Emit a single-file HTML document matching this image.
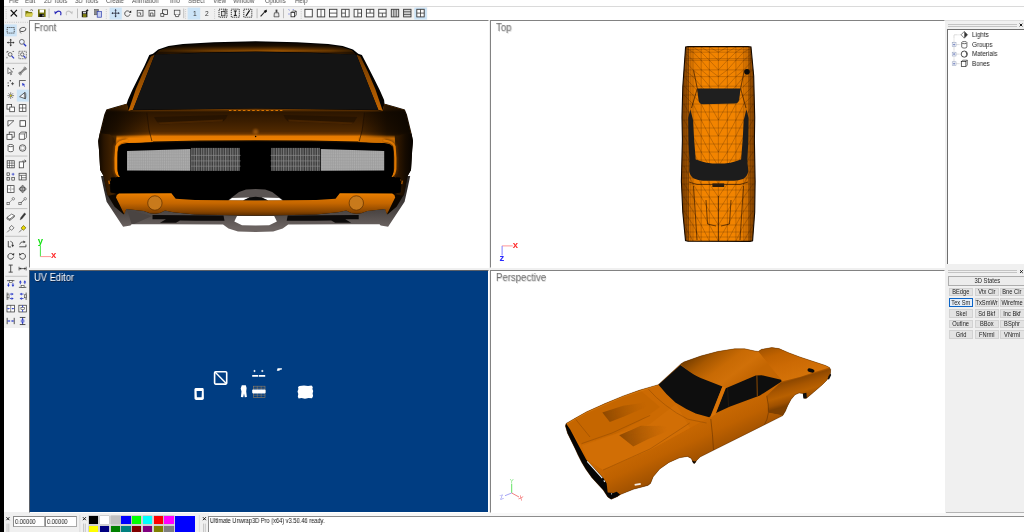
<!DOCTYPE html><html><head><meta charset="utf-8"><title>Ultimate Unwrap3D Pro</title><style>
html,body{margin:0;padding:0}
body{width:1024px;height:532px;position:relative;overflow:hidden;background:#f0f0f0;font-family:"Liberation Sans",sans-serif;color:#000}
.abs{position:absolute}
.t{position:absolute;white-space:nowrap;line-height:1;will-change:transform;transform-origin:0 50%}
.c{position:absolute;white-space:nowrap;line-height:1;will-change:transform;text-align:center}
.c span{display:inline-block}
.vp{position:absolute;background:#fff;box-sizing:border-box;border-top:1px solid #828282;border-left:1px solid #828282;border-right:1px solid #fff;border-bottom:1px solid #fff;overflow:hidden}
.lbl{will-change:transform;position:absolute;white-space:nowrap;font-size:10px;line-height:1;color:#6e6e6e;text-shadow:0.6px 0.6px 0 #d8d8d8;transform-origin:0 50%;transform:scaleX(0.96)}
.btn{position:absolute;box-sizing:border-box;border:1px solid #d2d2d2;background:#e3e3e3}
svg{position:absolute;left:0;top:0;overflow:visible}
</style></head><body>
<div class="abs" style="left:0;top:0;width:4px;height:532px;background:#000"></div>
<div class="abs" style="left:4px;top:0;width:1020px;height:6.4px;background:#fff"></div>
<div class="t" style="left:8.80px;top:-2.00px;font-size:6.6px;color:#505050;font-weight:400;transform:scaleX(0.91)">File</div>
<div class="t" style="left:25.00px;top:-2.00px;font-size:6.6px;color:#505050;font-weight:400;transform:scaleX(0.91)">Edit</div>
<div class="t" style="left:43.80px;top:-2.00px;font-size:6.6px;color:#505050;font-weight:400;transform:scaleX(0.91)">2D Tools</div>
<div class="t" style="left:75.00px;top:-2.00px;font-size:6.6px;color:#505050;font-weight:400;transform:scaleX(0.91)">3D Tools</div>
<div class="t" style="left:106.00px;top:-2.00px;font-size:6.6px;color:#505050;font-weight:400;transform:scaleX(0.91)">Create</div>
<div class="t" style="left:132.00px;top:-2.00px;font-size:6.6px;color:#505050;font-weight:400;transform:scaleX(0.91)">Animation</div>
<div class="t" style="left:169.50px;top:-2.00px;font-size:6.6px;color:#505050;font-weight:400;transform:scaleX(0.91)">Info</div>
<div class="t" style="left:188.00px;top:-2.00px;font-size:6.6px;color:#505050;font-weight:400;transform:scaleX(0.91)">Select</div>
<div class="t" style="left:212.50px;top:-2.00px;font-size:6.6px;color:#505050;font-weight:400;transform:scaleX(0.91)">View</div>
<div class="t" style="left:233.00px;top:-2.00px;font-size:6.6px;color:#505050;font-weight:400;transform:scaleX(0.91)">Window</div>
<div class="t" style="left:264.80px;top:-2.00px;font-size:6.6px;color:#505050;font-weight:400;transform:scaleX(0.91)">Options</div>
<div class="t" style="left:294.80px;top:-2.00px;font-size:6.6px;color:#505050;font-weight:400;transform:scaleX(0.91)">Help</div>
<div class="abs" style="left:4px;top:6.4px;width:1020px;height:13.6px;background:#f1f1f1;border-top:1px solid #dadada;box-sizing:border-box"></div>
<div class="abs" style="left:4px;top:20px;width:25px;height:308.4px;background:#f0f0f0"></div>
<div class="abs" style="left:4px;top:328.4px;width:25px;height:184px;background:#fff"></div>
<div class="vp" style="left:29px;top:20px;width:460px;height:248px"></div>
<div class="vp" style="left:490px;top:20px;width:455px;height:248px"></div>
<div class="vp" style="left:29px;top:270px;width:460px;height:243px;background:#003d82;border-top-color:#5a6068;border-left-color:#5a6068"></div>
<div class="vp" style="left:490px;top:270px;width:455px;height:243px"></div>
<div class="lbl" style="left:34.4px;top:23px">Front</div>
<div class="lbl" style="left:495.6px;top:23px">Top</div>
<div class="lbl" style="left:496.2px;top:273px">Perspective</div>
<div class="lbl" style="left:33.6px;top:273px;color:#fff;text-shadow:0.7px 0.7px 0 #0a1c3c;transform:scaleX(0.935)">UV Editor</div>
<div class="abs" style="left:945px;top:20px;width:79px;height:493px;background:#f0f0f0;border-top:1px solid #dedede;box-sizing:border-box"></div>
<div class="abs" style="left:948px;top:23.9px;width:69px;height:0.9px;background:#c4c4c4"></div>
<div class="abs" style="left:948px;top:25.799999999999997px;width:69px;height:0.9px;background:#c4c4c4"></div>
<div class="abs" style="left:947px;top:29px;width:77px;height:235px;background:#fff;border-left:1.4px solid #6e6e6e;border-top:1.4px solid #6e6e6e;box-sizing:border-box"></div>
<div class="t" style="left:971.60px;top:32.00px;font-size:6.7px;color:#1a1a1a;font-weight:400;transform:scaleX(0.936)">Lights</div>
<div class="t" style="left:971.60px;top:42.00px;font-size:6.7px;color:#1a1a1a;font-weight:400;transform:scaleX(0.936)">Groups</div>
<div class="t" style="left:971.60px;top:51.00px;font-size:6.7px;color:#1a1a1a;font-weight:400;transform:scaleX(0.936)">Materials</div>
<div class="t" style="left:971.60px;top:61.00px;font-size:6.7px;color:#1a1a1a;font-weight:400;transform:scaleX(0.936)">Bones</div>
<div class="abs" style="left:948px;top:270px;width:69px;height:0.9px;background:#c4c4c4"></div>
<div class="abs" style="left:948px;top:271.9px;width:69px;height:0.9px;background:#c4c4c4"></div>
<div class="btn" style="left:948.4px;top:276px;width:78px;height:9.6px;background:#ececec;border-color:#adadad"></div>
<div class="c" style="left:966.80px;width:40px;top:278.00px;font-size:6.5px;color:#222;font-weight:400"><span style="transform:scaleX(0.9)">3D States</span></div>
<div class="btn" style="left:949.2px;top:287.6px;width:24px;height:8.8px;"></div>
<div class="c" style="left:941.20px;width:40px;top:289.00px;font-size:6.5px;color:#222;font-weight:400"><span style="transform:scaleX(0.88)">BEdge</span></div>
<div class="btn" style="left:975px;top:287.6px;width:23.6px;height:8.8px;"></div>
<div class="c" style="left:966.80px;width:40px;top:289.00px;font-size:6.5px;color:#222;font-weight:400"><span style="transform:scaleX(0.88)">Vtx Clr</span></div>
<div class="btn" style="left:1000px;top:287.6px;width:26px;height:8.8px;"></div>
<div class="c" style="left:992.20px;width:40px;top:289.00px;font-size:6.5px;color:#222;font-weight:400"><span style="transform:scaleX(0.88)">Bne Clr</span></div>
<div class="btn" style="left:949.2px;top:298.3px;width:24px;height:8.8px;border:1px solid #0a64c8;background:#e6eef8;"></div>
<div class="c" style="left:941.20px;width:40px;top:300.00px;font-size:6.5px;color:#222;font-weight:400"><span style="transform:scaleX(0.88)">Tex Sm</span></div>
<div class="btn" style="left:975px;top:298.3px;width:23.6px;height:8.8px;"></div>
<div class="c" style="left:966.80px;width:40px;top:300.00px;font-size:6.5px;color:#222;font-weight:400"><span style="transform:scaleX(0.88)">TxSmWr</span></div>
<div class="btn" style="left:1000px;top:298.3px;width:26px;height:8.8px;"></div>
<div class="c" style="left:992.20px;width:40px;top:300.00px;font-size:6.5px;color:#222;font-weight:400"><span style="transform:scaleX(0.88)">Wirefme</span></div>
<div class="btn" style="left:949.2px;top:309.0px;width:24px;height:8.8px;"></div>
<div class="c" style="left:941.20px;width:40px;top:311.00px;font-size:6.5px;color:#222;font-weight:400"><span style="transform:scaleX(0.88)">Skel</span></div>
<div class="btn" style="left:975px;top:309.0px;width:23.6px;height:8.8px;"></div>
<div class="c" style="left:966.80px;width:40px;top:311.00px;font-size:6.5px;color:#222;font-weight:400"><span style="transform:scaleX(0.88)">Sd Bkf</span></div>
<div class="btn" style="left:1000px;top:309.0px;width:26px;height:8.8px;"></div>
<div class="c" style="left:992.20px;width:40px;top:311.00px;font-size:6.5px;color:#222;font-weight:400"><span style="transform:scaleX(0.88)">Inc Bkf</span></div>
<div class="btn" style="left:949.2px;top:319.7px;width:24px;height:8.8px;"></div>
<div class="c" style="left:941.20px;width:40px;top:321.00px;font-size:6.5px;color:#222;font-weight:400"><span style="transform:scaleX(0.88)">Outlne</span></div>
<div class="btn" style="left:975px;top:319.7px;width:23.6px;height:8.8px;"></div>
<div class="c" style="left:966.80px;width:40px;top:321.00px;font-size:6.5px;color:#222;font-weight:400"><span style="transform:scaleX(0.88)">BBox</span></div>
<div class="btn" style="left:1000px;top:319.7px;width:26px;height:8.8px;"></div>
<div class="c" style="left:992.20px;width:40px;top:321.00px;font-size:6.5px;color:#222;font-weight:400"><span style="transform:scaleX(0.88)">BSphr</span></div>
<div class="btn" style="left:949.2px;top:330.4px;width:24px;height:8.8px;"></div>
<div class="c" style="left:941.20px;width:40px;top:332.00px;font-size:6.5px;color:#222;font-weight:400"><span style="transform:scaleX(0.88)">Grid</span></div>
<div class="btn" style="left:975px;top:330.4px;width:23.6px;height:8.8px;"></div>
<div class="c" style="left:966.80px;width:40px;top:332.00px;font-size:6.5px;color:#222;font-weight:400"><span style="transform:scaleX(0.88)">FNrml</span></div>
<div class="btn" style="left:1000px;top:330.4px;width:26px;height:8.8px;"></div>
<div class="c" style="left:992.20px;width:40px;top:332.00px;font-size:6.5px;color:#222;font-weight:400"><span style="transform:scaleX(0.88)">VNrml</span></div>
<div class="abs" style="left:4px;top:513px;width:1020px;height:19px;background:#f0f0f0"></div>
<div class="abs" style="left:946px;top:512.2px;width:78px;height:0.9px;background:#b4b4b4"></div>
<div class="abs" style="left:209px;top:513.2px;width:815px;height:3px;background:#f8f8f8"></div>
<div class="abs" style="left:208.4px;top:516.2px;width:816px;height:16px;background:#fff;border-top:1px solid #8c8c8c;border-left:1px solid #8c8c8c;box-sizing:border-box"></div>
<div class="t" style="left:210.40px;top:518.00px;font-size:6.56px;color:#111;font-weight:400;transform:scaleX(0.868)">Ultimate Unwrap3D Pro (x64) v3.50.46 ready.</div>
<div class="abs" style="left:12.7px;top:516.4px;width:32px;height:10.4px;background:#fff;border:1px solid #a8a8a8;border-top-color:#8a8a8a;border-left-color:#8a8a8a;box-sizing:border-box"></div>
<div class="abs" style="left:44.5px;top:516.4px;width:32px;height:10.4px;background:#fff;border:1px solid #a8a8a8;border-top-color:#8a8a8a;border-left-color:#8a8a8a;box-sizing:border-box"></div>
<div class="t" style="left:15.00px;top:519.00px;font-size:6.56px;color:#222;font-weight:400;transform:scaleX(0.87)">0.00000</div>
<div class="t" style="left:46.90px;top:519.00px;font-size:6.56px;color:#222;font-weight:400;transform:scaleX(0.87)">0.00000</div>
<div class="abs" style="left:89.20px;top:516.4px;width:9.2px;height:7.8px;background:#000;box-shadow:0 0 0 0.5px #b0b0b0"></div>
<div class="abs" style="left:99.95px;top:516.4px;width:9.2px;height:7.8px;background:#fff;box-shadow:0 0 0 0.5px #b0b0b0"></div>
<div class="abs" style="left:110.70px;top:516.4px;width:9.2px;height:7.8px;background:#c0c0c0;box-shadow:0 0 0 0.5px #b0b0b0"></div>
<div class="abs" style="left:121.45px;top:516.4px;width:9.2px;height:7.8px;background:#0000ff;box-shadow:0 0 0 0.5px #b0b0b0"></div>
<div class="abs" style="left:132.20px;top:516.4px;width:9.2px;height:7.8px;background:#00ff00;box-shadow:0 0 0 0.5px #b0b0b0"></div>
<div class="abs" style="left:142.95px;top:516.4px;width:9.2px;height:7.8px;background:#00ffff;box-shadow:0 0 0 0.5px #b0b0b0"></div>
<div class="abs" style="left:153.70px;top:516.4px;width:9.2px;height:7.8px;background:#ff0000;box-shadow:0 0 0 0.5px #b0b0b0"></div>
<div class="abs" style="left:164.45px;top:516.4px;width:9.2px;height:7.8px;background:#ff00ff;box-shadow:0 0 0 0.5px #b0b0b0"></div>
<div class="abs" style="left:89.20px;top:525.8px;width:9.2px;height:7px;background:#ffff00;box-shadow:0 0 0 0.5px #b0b0b0"></div>
<div class="abs" style="left:99.95px;top:525.8px;width:9.2px;height:7px;background:#000080;box-shadow:0 0 0 0.5px #b0b0b0"></div>
<div class="abs" style="left:110.70px;top:525.8px;width:9.2px;height:7px;background:#008000;box-shadow:0 0 0 0.5px #b0b0b0"></div>
<div class="abs" style="left:121.45px;top:525.8px;width:9.2px;height:7px;background:#008080;box-shadow:0 0 0 0.5px #b0b0b0"></div>
<div class="abs" style="left:132.20px;top:525.8px;width:9.2px;height:7px;background:#800000;box-shadow:0 0 0 0.5px #b0b0b0"></div>
<div class="abs" style="left:142.95px;top:525.8px;width:9.2px;height:7px;background:#800080;box-shadow:0 0 0 0.5px #b0b0b0"></div>
<div class="abs" style="left:153.70px;top:525.8px;width:9.2px;height:7px;background:#808000;box-shadow:0 0 0 0.5px #b0b0b0"></div>
<div class="abs" style="left:164.45px;top:525.8px;width:9.2px;height:7px;background:#808080;box-shadow:0 0 0 0.5px #b0b0b0"></div>
<div class="abs" style="left:175.4px;top:516.2px;width:19.8px;height:16px;background:#0000ff"></div>
<svg width="1024" height="532" viewBox="0 0 1024 532">
<rect x="427.4" y="7" width="597" height="13" fill="#fff"/>
<rect x="109.6" y="7.6" width="12.2" height="12" fill="#cce4f7"/>
<rect x="187.6" y="7.6" width="12.6" height="12" fill="#cce4f7"/>
<rect x="414.3" y="7.6" width="12.6" height="12" fill="#cce4f7"/>
<rect x="21.3" y="8.6" width="0.9" height="9.6" fill="#b8b8b8"/>
<rect x="48.6" y="8.6" width="0.9" height="9.6" fill="#b8b8b8"/>
<rect x="77.1" y="8.6" width="0.9" height="9.6" fill="#b8b8b8"/>
<rect x="183.29999999999998" y="8.6" width="0.9" height="9.6" fill="#b8b8b8"/>
<rect x="256.6" y="8.6" width="0.9" height="9.6" fill="#b8b8b8"/>
<rect x="283.1" y="8.6" width="0.9" height="9.6" fill="#b8b8b8"/>
<path d="M6.2,9 L6.2,19" stroke="#c0c0c0" stroke-width="0.9" stroke-dasharray="0.9 1.3"/>
<path d="M106.3,9 L106.3,19" stroke="#c0c0c0" stroke-width="0.9" stroke-dasharray="0.9 1.3"/>
<path d="M185.6,9 L185.6,19" stroke="#c0c0c0" stroke-width="0.9" stroke-dasharray="0.9 1.3"/>
<path d="M214.6,9 L214.6,19" stroke="#c0c0c0" stroke-width="0.9" stroke-dasharray="0.9 1.3"/>
<path d="M301.2,9 L301.2,19" stroke="#c0c0c0" stroke-width="0.9" stroke-dasharray="0.9 1.3"/>
<path d="M10.7,10 L17,16.5 M16.9,9.9 L10.7,16.4" stroke="#111" stroke-width="1.15" fill="none"/>
<path d="M25.4,11 L28,11 L28.7,12 L32.2,12 L32.2,16.6 L25.4,16.6 Z" fill="#7a7a10"/><path d="M26.6,13.3 L33.4,13.3 L31.6,16.6 L25.4,16.6 Z" fill="#d8d050"/><path d="M30.2,10.3 Q31.5,9 32.8,10.3 L32.2,10.8" stroke="#333" stroke-width="0.6" fill="none"/>
<rect x="38" y="9.4" width="7.6" height="7.6" fill="#6e6e08"/><rect x="39.6" y="9.6" width="4.4" height="3" fill="#fff"/><rect x="39.4" y="14" width="4.6" height="3" fill="#101010"/><rect x="42.6" y="14.6" width="0.9" height="1.8" fill="#ddd"/>
<path d="M55.6,13 Q57.6,10.4 60,11.4 Q61.6,12.6 60.6,15.2" stroke="#2a2ab8" stroke-width="1.1" fill="none"/><path d="M54.2,11.2 L57.2,12.2 L55,14.6 Z" fill="#2a2ab8"/>
<path d="M71.6,13 Q69.6,10.4 67.2,11.4 Q65.6,12.6 66.6,15.2" stroke="#c4c4c4" stroke-width="1.1" fill="none"/><path d="M73,11.2 L70,12.2 L72.2,14.6 Z" fill="#c4c4c4"/>
<rect x="81.8" y="11.2" width="5.6" height="6" fill="#141414"/><rect x="82.8" y="14" width="3.6" height="3.2" fill="#7c7c10"/><rect x="83" y="11.8" width="3" height="1.6" fill="#d8d8d8"/><path d="M85.6,10.8 L87.4,9.2 L88.6,10.2 L87.4,11.4" fill="#222"/>
<rect x="94.6" y="9.4" width="3.8" height="5.4" fill="#8a8a8a" stroke="#444" stroke-width="0.5"/><rect x="97.2" y="11.6" width="4.2" height="5.6" fill="#c8d0f0" stroke="#3040b0" stroke-width="0.7"/>
<path d="M115.6,9.8 L115.6,16.6 M112.2,13.2 L119,13.2" stroke="#2c3040" stroke-width="0.8"/><path d="M115.6,9 L114.5,10.6 L116.7,10.6 Z M115.6,17.4 L114.5,15.8 L116.7,15.8 Z M111.4,13.2 L113,12.1 L113,14.3 Z M119.8,13.2 L118.2,12.1 L118.2,14.3 Z" fill="#2c3040"/>
<path d="M129.4,11.8 A2.7,2.7 0 1 0 130,14.3" stroke="#333" stroke-width="0.8" fill="none"/><path d="M131.2,10.4 L131.2,13 L128.8,12.2 Z" fill="#111"/>
<rect x="137.2" y="10.3" width="5.8" height="5.8" fill="none" stroke="#3c3c3c" stroke-width="0.75"/><path d="M138.4,12.8 L140.6,12.8 L140.6,15" stroke="#333" stroke-width="0.7" fill="none"/>
<rect x="149" y="10.3" width="5.8" height="5.8" fill="none" stroke="#3c3c3c" stroke-width="0.75"/><path d="M150.4,16 L150.4,13 L153,13 L153,16" stroke="#333" stroke-width="0.7" fill="none"/>
<rect x="162.4" y="9.8" width="5.2" height="4.6" fill="none" stroke="#333" stroke-width="0.8"/><rect x="160.8" y="13.6" width="3" height="2.8" fill="#f0f0f0" stroke="#333" stroke-width="0.7"/>
<rect x="174.3" y="10.2" width="5.6" height="4.4" fill="none" stroke="#3c3c3c" stroke-width="0.75"/><path d="M175.2,14.6 L175.6,16.6 L178.6,16.6 L179,14.6" stroke="#333" stroke-width="0.8" fill="#fff"/>
<rect x="219" y="9.2" width="8" height="8" fill="none" stroke="#222" stroke-width="0.9" stroke-dasharray="1.2 0.8"/>
<rect x="231.3" y="9.2" width="8" height="8" fill="none" stroke="#222" stroke-width="0.9" stroke-dasharray="1.2 0.8"/>
<rect x="243.8" y="9.2" width="8" height="8" fill="none" stroke="#222" stroke-width="0.9" stroke-dasharray="1.2 0.8"/>
<rect x="221.4" y="11.4" width="3.6" height="4.4" fill="#ddd" stroke="#222" stroke-width="0.7"/><path d="M223,11.4 L224.6,10 L226,10 L226,14" stroke="#222" stroke-width="0.6" fill="none"/>
<path d="M235.3,11 L235.3,15.4 M233.8,11 L236.8,11 M233.8,15.4 L236.8,15.4" stroke="#111" stroke-width="1"/>
<path d="M246,16 L249.6,10.4" stroke="#111" stroke-width="1.2"/>
<path d="M260.6,16.4 L264.6,12" stroke="#222" stroke-width="1.1"/><path d="M263.6,11 L266.6,9.4 L267,11.6 L265.4,13 Z" fill="#111"/>
<rect x="275.6" y="9.6" width="1.8" height="3" fill="#444"/><path d="M274.4,12.8 L278.6,12.8 L279,16.8 L274,16.8 Z" fill="#e8e8e8" stroke="#333" stroke-width="0.7"/>
<rect x="291" y="12.6" width="3.6" height="4.2" fill="#fff" stroke="#222" stroke-width="0.8"/><path d="M291,12.6 L292.6,11 L296.2,11 L296.2,15 L294.6,16.8 M294.6,12.6 L296.2,11" stroke="#222" stroke-width="0.7" fill="none"/><path d="M288.6,9.6 L289.6,10.2 M293,9.2 L293.6,10 M288.4,14 L289.6,14" stroke="#4050d0" stroke-width="0.8"/>
<rect x="304.9" y="9.3" width="7.4" height="7.6" fill="#fdfdfd" stroke="#3a3a3a" stroke-width="0.9"/>
<rect x="317.3" y="9.3" width="7.4" height="7.6" fill="#fdfdfd" stroke="#3a3a3a" stroke-width="0.9"/>
<path d="M321,9.3 L321,16.9" stroke="#3a3a3a" stroke-width="0.8" fill="none"/>
<rect x="329.5" y="9.3" width="7.4" height="7.6" fill="#fdfdfd" stroke="#3a3a3a" stroke-width="0.9"/>
<path d="M329.5,13.100000000000001 L336.9,13.100000000000001" stroke="#3a3a3a" stroke-width="0.8" fill="none"/>
<rect x="341.7" y="9.3" width="7.4" height="7.6" fill="#fdfdfd" stroke="#3a3a3a" stroke-width="0.9"/>
<path d="M345.4,9.3 L345.4,16.9 M341.7,13.100000000000001 L345.4,13.100000000000001" stroke="#3a3a3a" stroke-width="0.8" fill="none"/>
<rect x="354.1" y="9.3" width="7.4" height="7.6" fill="#fdfdfd" stroke="#3a3a3a" stroke-width="0.9"/>
<path d="M357.8,9.3 L357.8,16.9 M357.8,13.100000000000001 L361.5,13.100000000000001" stroke="#3a3a3a" stroke-width="0.8" fill="none"/>
<rect x="366.4" y="9.3" width="7.4" height="7.6" fill="#fdfdfd" stroke="#3a3a3a" stroke-width="0.9"/>
<path d="M366.40000000000003,13.100000000000001 L373.8,13.100000000000001 M370.1,9.3 L370.1,13.100000000000001" stroke="#3a3a3a" stroke-width="0.8" fill="none"/>
<rect x="378.7" y="9.3" width="7.4" height="7.6" fill="#fdfdfd" stroke="#3a3a3a" stroke-width="0.9"/>
<path d="M378.7,13.100000000000001 L386.09999999999997,13.100000000000001 M382.4,13.100000000000001 L382.4,16.9" stroke="#3a3a3a" stroke-width="0.8" fill="none"/>
<rect x="391.3" y="9.3" width="7.4" height="7.6" fill="#d8d8d8" stroke="#3a3a3a" stroke-width="0.9"/>
<path d="M393.8,9.3 L393.8,16.9 M396.2,9.3 L396.2,16.9" stroke="#3a3a3a" stroke-width="0.8" fill="none"/>
<rect x="403.6" y="9.3" width="7.4" height="7.6" fill="#d8d8d8" stroke="#3a3a3a" stroke-width="0.9"/>
<path d="M403.6,11.8 L411.0,11.8 M403.6,14.4 L411.0,14.4" stroke="#3a3a3a" stroke-width="0.8" fill="none"/>
<rect x="416.8" y="9.3" width="7.4" height="7.6" fill="#fdfdfd" stroke="#3a3a3a" stroke-width="0.9"/>
<path d="M420.5,9.3 L420.5,16.9 M416.8,13.100000000000001 L424.2,13.100000000000001" stroke="#3a3a3a" stroke-width="0.8" fill="none"/>
</svg>
<div class="c" style="left:174.90px;width:40px;top:10.00px;font-size:7px;color:#333;font-weight:400"><span style="transform:scaleX(0.95)">1</span></div>
<div class="c" style="left:186.80px;width:40px;top:10.00px;font-size:7px;color:#333;font-weight:400"><span style="transform:scaleX(0.95)">2</span></div>
<svg width="1024" height="532" viewBox="0 0 1024 532">
<path d="M5,22.3 L28,22.3" stroke="#bdbdbd" stroke-width="0.9" stroke-dasharray="0.9 1.3"/>
<rect x="5.4" y="62.800000000000004" width="22" height="0.9" fill="#bcbcbc"/>
<rect x="5.4" y="115.6" width="22" height="0.9" fill="#bcbcbc"/>
<rect x="5.4" y="155.6" width="22" height="0.9" fill="#bcbcbc"/>
<rect x="5.4" y="208.2" width="22" height="0.9" fill="#bcbcbc"/>
<rect x="5.4" y="235.79999999999998" width="22" height="0.9" fill="#bcbcbc"/>
<rect x="5.4" y="275.8" width="22" height="0.9" fill="#bcbcbc"/>
<rect x="4.2" y="24.4" width="12.6" height="12" fill="#cce4f7"/>
<rect x="16.8" y="89.6" width="12" height="12" fill="#cce4f7"/>
<g transform="translate(10.7,30.3) scale(0.93)"><rect x="-3.8" y="-3" width="7.6" height="6" fill="none" stroke="#333" stroke-width="0.9" stroke-dasharray="1.4 0.8"/></g>
<g transform="translate(22.6,30.3) scale(0.93)"><ellipse cx="0.4" cy="-0.8" rx="3.4" ry="2.2" fill="none" stroke="#343434" stroke-width="0.8" transform="rotate(-15)"/><path d="M-2.6,0.4 Q-3.4,2.2 -1.6,3.4" stroke="#343434" stroke-width="0.7" fill="none"/></g>
<g transform="translate(10.7,42.6) scale(0.93)"><path d="M0,-3.2 L0,3.2 M-3.2,0 L3.2,0" stroke="#343434" stroke-width="0.9"/><path d="M0,-4.2 L-1.3,-2.4 L1.3,-2.4 Z M0,4.2 L-1.3,2.4 L1.3,2.4 Z M-4.2,0 L-2.4,-1.3 L-2.4,1.3 Z M4.2,0 L2.4,-1.3 L2.4,1.3 Z" fill="#343434"/></g>
<g transform="translate(22.6,42.6) scale(0.93)"><circle cx="-0.8" cy="-0.8" r="2.6" fill="#eef4ff" stroke="#444" stroke-width="0.8"/><path d="M1.2,1.2 L3.8,3.8" stroke="#2838c8" stroke-width="1.5"/></g>
<g transform="translate(10.7,55) scale(0.93)"><circle cx="-0.6" cy="-0.6" r="2" fill="none" stroke="#444" stroke-width="0.8"/><path d="M1,1 L3.6,3.6" stroke="#2838c8" stroke-width="1.3"/><path d="M-4,-3.8 L-2.4,-3.8 M-4,-3.8 L-4,-2.2 M3.6,-3.8 L2,-3.8 M-4,3.6 L-4,2" stroke="#343434" stroke-width="0.7"/></g>
<g transform="translate(22.6,55) scale(0.93)"><rect x="-4" y="-4" width="8" height="8" fill="none" stroke="#343434" stroke-width="0.8" stroke-dasharray="1 0.8"/><circle cx="-0.4" cy="-0.6" r="1.8" fill="none" stroke="#444" stroke-width="0.8"/><path d="M1,1 L3,3" stroke="#2838c8" stroke-width="1.3"/></g>
<g transform="translate(10.7,71) scale(0.93)"><path d="M-3,-3.6 L-3,3 L-1.2,1.4 L0,4 L1,3.6 L-0.2,1 L2,1 Z" fill="#fff" stroke="#343434" stroke-width="0.7"/><circle cx="2.8" cy="-2.6" r="0.7" fill="#343434"/></g>
<g transform="translate(22.6,71) scale(0.93)"><path d="M-2.6,2.6 L2.6,-2.6" stroke="#343434" stroke-width="2"/><path d="M-2.6,2.6 L2.6,-2.6" stroke="#f2f2f2" stroke-width="0.9"/><circle cx="-3.3" cy="2.3" r="0.9" fill="#f2f2f2" stroke="#343434" stroke-width="0.55"/><circle cx="-2.3" cy="3.3" r="0.9" fill="#f2f2f2" stroke="#343434" stroke-width="0.55"/><circle cx="3.3" cy="-2.3" r="0.9" fill="#f2f2f2" stroke="#343434" stroke-width="0.55"/><circle cx="2.3" cy="-3.3" r="0.9" fill="#f2f2f2" stroke="#343434" stroke-width="0.55"/></g>
<g transform="translate(10.7,83.3) scale(0.93)"><circle cx="-2.6" cy="2.6" r="0.8" fill="#343434"/><circle cx="-0.4" cy="-2.8" r="0.8" fill="#343434"/><circle cx="-2.8" cy="-0.4" r="0.6" fill="#343434"/><path d="M0.4,0.4 L3.6,0.4 M2,-1.2 L2,2" stroke="#343434" stroke-width="0.8"/></g>
<g transform="translate(22.6,83.3) scale(0.93)"><path d="M-3.4,-3 L3.4,-3 M-3.4,-3 L-3.4,3.6" stroke="#343434" stroke-width="0.8"/><path d="M-0.6,-0.4 L2.8,1 L1.4,1.5 L2.6,3.2 L1.8,3.6 L0.7,1.9 L-0.1,2.8 Z" fill="#2838c8"/></g>
<g transform="translate(10.7,95.6) scale(0.93)"><path d="M0,-3.6 L0,3.6 M-3.6,0 L3.6,0 M-2.5,-2.5 L2.5,2.5 M-2.5,2.5 L2.5,-2.5" stroke="#343434" stroke-width="0.6"/><circle r="0.9" fill="#d8c800"/></g>
<g transform="translate(22.6,95.6) scale(0.93)"><path d="M-3.2,1.2 L2.4,-3.4 L3,3.4 Z" fill="#f4f8ff" stroke="#343434" stroke-width="0.8"/><ellipse cx="2.7" cy="0" rx="0.9" ry="3.3" fill="none" stroke="#343434" stroke-width="0.5"/></g>
<g transform="translate(10.7,108) scale(0.93)"><rect x="-4" y="-3.8" width="5" height="5" fill="#fff" stroke="#343434" stroke-width="0.8"/><rect x="-1" y="-1" width="5" height="5" fill="#fff" stroke="#343434" stroke-width="0.8"/></g>
<g transform="translate(22.6,108) scale(0.93)"><rect x="-3.6" y="-3.6" width="7.2" height="7.2" fill="#fff" stroke="#343434" stroke-width="0.8"/><path d="M0,-3.6 L0,3.6 M-3.6,0 L3.6,0" stroke="#343434" stroke-width="0.7"/></g>
<g transform="translate(10.7,123.5) scale(0.93)"><path d="M-3,3 L-3,-3 L3.4,-3 Z" fill="#fff" stroke="#343434" stroke-width="0.8"/></g>
<g transform="translate(22.6,123.5) scale(0.93)"><rect x="-2.8" y="-3" width="6" height="6" fill="#fff" stroke="#343434" stroke-width="0.9"/></g>
<g transform="translate(10.7,135.8) scale(0.93)"><rect x="-1.6" y="-4" width="5.4" height="5.4" fill="#fff" stroke="#343434" stroke-width="0.8"/><rect x="-4" y="-1.6" width="5.4" height="5.4" fill="#fff" stroke="#343434" stroke-width="0.8"/></g>
<g transform="translate(22.6,135.8) scale(0.93)"><path d="M-3.6,-2 L-1.6,-4 L4,-4 L4,1.8 L2,3.8 L-3.6,3.8 Z" fill="#fff" stroke="#343434" stroke-width="0.8"/><path d="M-3.6,-2 L2,-2 L2,3.8 M2,-2 L4,-4" stroke="#343434" stroke-width="0.7" fill="none"/></g>
<g transform="translate(10.7,148) scale(0.93)"><path d="M-2.8,-2.6 L-2.8,2.8 A2.8,1.2 0 0 0 2.8,2.8 L2.8,-2.6" fill="#fff" stroke="#343434" stroke-width="0.8"/><ellipse cx="0" cy="-2.6" rx="2.8" ry="1.2" fill="#fff" stroke="#343434" stroke-width="0.8"/></g>
<g transform="translate(22.6,148) scale(0.93)"><circle r="3.5" fill="#e8e8e8" stroke="#343434" stroke-width="0.8"/><circle r="2" fill="#fafafa" stroke="#888" stroke-width="0.5"/></g>
<g transform="translate(10.7,164.3) scale(0.93)"><rect x="-3.8" y="-3.8" width="7.6" height="7.6" fill="#fff" stroke="#343434" stroke-width="0.8"/><path d="M-1.3,-3.8 L-1.3,3.8 M1.3,-3.8 L1.3,3.8 M-3.8,-1.3 L3.8,-1.3 M-3.8,1.3 L3.8,1.3" stroke="#343434" stroke-width="0.6"/></g>
<g transform="translate(22.6,164.3) scale(0.93)"><rect x="-3.6" y="-2.6" width="4.6" height="6.4" fill="#fff" stroke="#343434" stroke-width="0.8"/><path d="M-0.4,-3.4 L3.4,-3.4 M3.8,-3.4 L2,-4.8 M3.8,-3.4 L2,-2" stroke="#343434" stroke-width="0.8" fill="none"/></g>
<g transform="translate(10.7,176.6) scale(0.93)"><rect x="-4" y="-4" width="2.8" height="2.8" fill="none" stroke="#343434" stroke-width="0.7"/><rect x="-4" y="1" width="2.8" height="2.8" fill="none" stroke="#343434" stroke-width="0.7"/><rect x="1.2" y="1" width="2.8" height="2.8" fill="none" stroke="#343434" stroke-width="0.7"/><path d="M1,-2.6 L4,-2.6 M2.6,-4 L2.6,-1" stroke="#2838c8" stroke-width="0.8"/></g>
<g transform="translate(22.6,176.6) scale(0.93)"><rect x="-3.8" y="-3.6" width="7.6" height="7.2" fill="#fff" stroke="#343434" stroke-width="0.8"/><path d="M-3.8,-1.4 L3.8,-1.4 M-1.2,-1.4 L-1.2,3.6 M-1.2,1.2 L3.8,1.2" stroke="#343434" stroke-width="0.7"/></g>
<g transform="translate(10.7,189) scale(0.93)"><rect x="-3.6" y="-3.6" width="7.2" height="7.2" fill="#fff" stroke="#343434" stroke-width="0.8"/><path d="M0,-3.6 L0,3.6 M-3.6,0 L3.6,0" stroke="#343434" stroke-width="0.6" stroke-dasharray="1 0.6"/></g>
<g transform="translate(22.6,189) scale(0.93)"><ellipse rx="3.8" ry="2" fill="none" stroke="#343434" stroke-width="0.7"/><ellipse rx="2" ry="3.8" fill="none" stroke="#343434" stroke-width="0.7"/><path d="M0,-3.8 L0,3.8 M-3.8,0 L3.8,0" stroke="#343434" stroke-width="0.5"/></g>
<g transform="translate(10.7,201.2) scale(0.93)"><path d="M-2,2 L2,-2" stroke="#343434" stroke-width="0.7" stroke-dasharray="1 0.8"/><rect x="-4" y="1.4" width="2.4" height="2.4" fill="#fff" stroke="#343434" stroke-width="0.6"/><circle cx="2.8" cy="-2.6" r="1.3" fill="#fff" stroke="#343434" stroke-width="0.6"/></g>
<g transform="translate(22.6,201.2) scale(0.93)"><path d="M-2,2 L2,-2" stroke="#343434" stroke-width="0.8"/><rect x="-4" y="1.4" width="2.4" height="2.4" fill="#fff" stroke="#343434" stroke-width="0.6"/><circle cx="2.8" cy="-2.6" r="1.3" fill="#fff" stroke="#343434" stroke-width="0.6"/></g>
<g transform="translate(10.7,216.5) scale(0.93)"><path d="M-4,1 L1,-2.6 L4,-1 L-1,2.8 Z" fill="#fff" stroke="#343434" stroke-width="0.7"/><path d="M-4,1 L-4,2.6 L-1,4.2 L-1,2.8 M-1,4.2 L4,0.4 L4,-1" stroke="#343434" stroke-width="0.7" fill="none"/></g>
<g transform="translate(22.6,216.5) scale(0.93)"><path d="M-2.6,3.6 L-1.8,1 L2,-3.8 L3.4,-2.6 L-0.4,2.2 Z" fill="#333" stroke="#343434" stroke-width="0.5"/></g>
<g transform="translate(10.7,228.8) scale(0.93)"><path d="M-3.8,3.8 L-0.6,0.6" stroke="#343434" stroke-width="0.7"/><path d="M-1.6,-0.8 L1,-3.6 L3.6,-1 L0.8,1.6 Z" fill="#f4f4f4" stroke="#343434" stroke-width="0.7"/></g>
<g transform="translate(22.6,228.8) scale(0.93)"><path d="M-3.8,3.8 L-0.6,0.6" stroke="#343434" stroke-width="0.7"/><path d="M-1.6,-0.8 L1,-3.6 L3.6,-1 L0.8,1.6 Z" fill="#e8d800" stroke="#5a5400" stroke-width="0.7"/></g>
<g transform="translate(10.7,244) scale(0.93)"><path d="M-2.6,-3.2 L-2.6,3.2 L0.4,3.2" stroke="#343434" stroke-width="0.9" fill="none"/><path d="M-0.4,-3 Q3,-2.4 2.2,1.4" stroke="#343434" stroke-width="0.8" fill="none"/><path d="M2.2,3.4 L0.6,0.8 L3.6,1 Z" fill="#343434"/></g>
<g transform="translate(22.6,244) scale(0.93)"><path d="M-3.6,3 L3.6,3 L3.6,0.6" stroke="#343434" stroke-width="0.9" fill="none"/><path d="M-3.2,0.6 Q-2.6,-2.8 1.4,-2.4" stroke="#343434" stroke-width="0.8" fill="none"/><path d="M3.4,-2.2 L0.8,-3.8 L1,-0.8 Z" fill="#343434"/></g>
<g transform="translate(10.7,256.3) scale(0.93)"><path d="M2.2,-2.2 A3.1,3.1 0 1 0 3.1,0.4" stroke="#343434" stroke-width="0.9" fill="none"/><path d="M3.8,-3.6 L3.6,-0.6 L1,-2 Z" fill="#343434"/></g>
<g transform="translate(22.6,256.3) scale(0.93)"><path d="M-2.2,-2.2 A3.1,3.1 0 1 1 -3.1,0.4" stroke="#343434" stroke-width="0.9" fill="none"/><path d="M-3.8,-3.6 L-3.6,-0.6 L-1,-2 Z" fill="#343434"/></g>
<g transform="translate(10.7,268.6) scale(0.93)"><path d="M0,-3.8 L0,3.8 M-2.2,-3.8 L2.2,-3.8 M-2.2,3.8 L2.2,3.8" stroke="#343434" stroke-width="0.9"/></g>
<g transform="translate(22.6,268.6) scale(0.93)"><path d="M-3.8,0 L3.8,0 M-3.8,-2 L-3.8,2 M3.8,-2 L3.8,2" stroke="#343434" stroke-width="0.8"/><path d="M-3.4,0 L-1.6,-1.2 L-1.6,1.2 Z M3.4,0 L1.6,-1.2 L1.6,1.2 Z" fill="#343434"/></g>
<g transform="translate(10.7,284) scale(0.93)"><path d="M-4,-3.6 L4,-3.6" stroke="#343434" stroke-width="0.8"/><rect x="-1.6" y="-3.6" width="3.2" height="2" fill="#fff" stroke="#343434" stroke-width="0.6"/><path d="M-2.4,-1.0 L-2.4,1.2" stroke="#2838c8" stroke-width="0.9"/><path d="M-2.4,3.2 L-3.9,0.9 L-0.9,0.9 Z" fill="#2838c8"/><path d="M2.4,-1.0 L2.4,1.2" stroke="#2838c8" stroke-width="0.9"/><path d="M2.4,3.2 L0.9,0.9 L3.9,0.9 Z" fill="#2838c8"/></g>
<g transform="translate(22.6,284) scale(0.93)"><path d="M-4,3.6 L4,3.6" stroke="#343434" stroke-width="0.8"/><rect x="-1.6" y="1.6" width="3.2" height="2" fill="#fff" stroke="#343434" stroke-width="0.6"/><path d="M-2.4,0.2 L-2.4,-2.0" stroke="#2838c8" stroke-width="0.9"/><path d="M-2.4,-4.0 L-0.9,-1.7 L-3.9,-1.7 Z" fill="#2838c8"/><path d="M2.4,0.2 L2.4,-2.0" stroke="#2838c8" stroke-width="0.9"/><path d="M2.4,-4.0 L3.9,-1.7 L0.9,-1.7 Z" fill="#2838c8"/></g>
<g transform="translate(10.7,296.3) scale(0.93)"><path d="M-3.8,-4 L-3.8,4" stroke="#343434" stroke-width="0.8"/><rect x="-3.8" y="-1.6" width="2" height="3.2" fill="#fff" stroke="#343434" stroke-width="0.6"/><path d="M-2.6,-3.4 Q-1.6,-3 -2.6,-2.4 M-2.6,2.4 Q-1.6,3 -2.6,3.4" stroke="#343434" stroke-width="0.5" fill="none"/><path d="M-1.0,-2.4 L1.2,-2.4" stroke="#2838c8" stroke-width="0.9"/><path d="M3.2,-2.4 L0.9,-0.9 L0.9,-3.9 Z" fill="#2838c8"/><path d="M-1.0,2.4 L1.2,2.4" stroke="#2838c8" stroke-width="0.9"/><path d="M3.2,2.4 L0.9,3.9 L0.9,0.9 Z" fill="#2838c8"/></g>
<g transform="translate(22.6,296.3) scale(0.93)"><path d="M3.8,-4 L3.8,4" stroke="#343434" stroke-width="0.8"/><rect x="1.8" y="-1.6" width="2" height="3.2" fill="#fff" stroke="#343434" stroke-width="0.6"/><path d="M1.0,-2.4 L-1.2,-2.4" stroke="#2838c8" stroke-width="0.9"/><path d="M-3.2,-2.4 L-0.9,-3.9 L-0.9,-0.9 Z" fill="#2838c8"/><path d="M1.0,2.4 L-1.2,2.4" stroke="#2838c8" stroke-width="0.9"/><path d="M-3.2,2.4 L-0.9,0.9 L-0.9,3.9 Z" fill="#2838c8"/></g>
<g transform="translate(10.7,308.6) scale(0.93)"><rect x="-4" y="-3.6" width="8" height="7.2" fill="#fff" stroke="#343434" stroke-width="0.8"/><path d="M0,-3.6 L0,3.6" stroke="#343434" stroke-width="0.6"/><path d="M-3.7,0.0 L-2.2,0.0" stroke="#2838c8" stroke-width="0.9"/><path d="M-0.8,0.0 L-2.5,1.0 L-2.5,-1.0 Z" fill="#2838c8"/><path d="M3.7,0.0 L2.2,0.0" stroke="#2838c8" stroke-width="0.9"/><path d="M0.8,0.0 L2.5,-1.0 L2.5,1.0 Z" fill="#2838c8"/></g>
<g transform="translate(22.6,308.6) scale(0.93)"><rect x="-4" y="-3.6" width="8" height="7.2" fill="#fff" stroke="#343434" stroke-width="0.8"/><rect x="-1.8" y="-1.2" width="3.6" height="2.4" fill="#fff" stroke="#343434" stroke-width="0.6"/><path d="M0.0,-3.6 L0.0,-2.4" stroke="#2838c8" stroke-width="0.9"/><path d="M0.0,-1.3 L-0.8,-2.7 L0.8,-2.7 Z" fill="#2838c8"/><path d="M0.0,3.6 L0.0,2.4" stroke="#2838c8" stroke-width="0.9"/><path d="M0.0,1.3 L0.8,2.7 L-0.8,2.7 Z" fill="#2838c8"/></g>
<g transform="translate(10.7,321) scale(0.93)"><path d="M-3.8,-3.4 L-3.8,3.4 M3.8,-3.4 L3.8,3.4" stroke="#343434" stroke-width="0.9"/><path d="M-3.6,0.0 L-1.8,0.0" stroke="#2838c8" stroke-width="0.9"/><path d="M-0.2,0.0 L-2.1,1.2 L-2.1,-1.2 Z" fill="#2838c8"/><path d="M3.6,0.0 L1.8,0.0" stroke="#2838c8" stroke-width="0.9"/><path d="M0.2,0.0 L2.1,-1.2 L2.1,1.2 Z" fill="#2838c8"/></g>
<g transform="translate(22.6,321) scale(0.93)"><path d="M-3,-3.8 L3,-3.8 M-3,3.8 L3,3.8 M0,-3.8 L0,-2.6 M0,2.6 L0,3.8" stroke="#343434" stroke-width="0.9"/><path d="M-2,-0.8 L2,-0.8 M-2,0.8 L2,0.8" stroke="#2838c8" stroke-width="0.8"/><path d="M0.0,-3.3 L0.0,-1.8" stroke="#2838c8" stroke-width="0.9"/><path d="M0.0,-0.4 L-1.0,-2.1 L1.0,-2.1 Z" fill="#2838c8"/><path d="M0.0,3.3 L0.0,1.8" stroke="#2838c8" stroke-width="0.9"/><path d="M0.0,0.4 L1.0,2.1 L-1.0,2.1 Z" fill="#2838c8"/></g>
<path d="M954,35 L954,63.7 M954,34.8 L961,34.8 M956,44.6 L960.5,44.6 M956,54.1 L960.5,54.1 M956,63.7 L960.5,63.7" stroke="#a0a0a0" stroke-width="0.6" fill="none" stroke-dasharray="0.6 0.6"/>
<rect x="952.2" y="42.7" width="3.8" height="3.8" fill="#fff" stroke="#8a98b8" stroke-width="0.5"/><path d="M953,44.6 L955.2,44.6 M954.1,43.5 L954.1,45.7" stroke="#3048a0" stroke-width="0.5"/>
<rect x="952.2" y="52.2" width="3.8" height="3.8" fill="#fff" stroke="#8a98b8" stroke-width="0.5"/><path d="M953,54.1 L955.2,54.1 M954.1,53.0 L954.1,55.2" stroke="#3048a0" stroke-width="0.5"/>
<rect x="952.2" y="61.800000000000004" width="3.8" height="3.8" fill="#fff" stroke="#8a98b8" stroke-width="0.5"/><path d="M953,63.7 L955.2,63.7 M954.1,62.6 L954.1,64.8" stroke="#3048a0" stroke-width="0.5"/>
<path d="M961.0999999999999,34.8 L964.3,31.4 L967.5,34.8 L964.3,38.2 Z" fill="#fff" stroke="#333" stroke-width="0.6"/><path d="M964.3,31.4 L967.5,34.8 L964.3,38.2 Z" fill="#333"/>
<path d="M961.6999999999999,42.8 L961.6999999999999,47 A2.6,1.1 0 0 0 966.9,47 L966.9,42.8" fill="#fff" stroke="#333" stroke-width="0.7"/><ellipse cx="964.3" cy="42.6" rx="2.6" ry="1.1" fill="#fff" stroke="#333" stroke-width="0.7"/>
<circle cx="964.3" cy="54.1" r="3.1" fill="#fff" stroke="#222" stroke-width="0.8"/><path d="M964.9,51.2 A3.1,3.1 0 0 1 964.9,57 A4.2,4.2 0 0 0 964.9,51.2 Z" fill="#222"/>
<rect x="961.3" y="61.6" width="4.6" height="5" fill="#fff" stroke="#222" stroke-width="0.7"/><path d="M961.3,61.6 L962.6999999999999,60.2 L967.3,60.2 L967.3,65 L965.9,66.6 M965.9,61.6 L967.3,60.2" stroke="#222" stroke-width="0.6" fill="none"/>
</svg>
<svg width="1024" height="532" viewBox="0 0 1024 532">
<defs>
<linearGradient id="gRoof" x1="0" y1="41" x2="0" y2="52" gradientUnits="userSpaceOnUse"><stop offset="0" stop-color="#050200"/><stop offset="0.45" stop-color="#1e0f00"/><stop offset="0.75" stop-color="#6e3a00"/><stop offset="0.92" stop-color="#a85a00"/><stop offset="1" stop-color="#5a2e00"/></linearGradient>
<linearGradient id="gHood" x1="0" y1="109" x2="0" y2="142" gradientUnits="userSpaceOnUse"><stop offset="0" stop-color="#7a4000"/><stop offset="0.09" stop-color="#2c1600"/><stop offset="0.39" stop-color="#3c1e00"/><stop offset="0.68" stop-color="#502900"/><stop offset="0.76" stop-color="#6e3800"/><stop offset="0.83" stop-color="#e47a00"/><stop offset="1" stop-color="#f28400"/></linearGradient>
<linearGradient id="gBody" x1="0" y1="41" x2="0" y2="215" gradientUnits="userSpaceOnUse"><stop offset="0" stop-color="#000"/><stop offset="0.36" stop-color="#060300"/><stop offset="0.55" stop-color="#1c0e00"/><stop offset="0.8" stop-color="#0e0700"/><stop offset="1" stop-color="#0a0500"/></linearGradient>
<linearGradient id="gBump" x1="0" y1="193" x2="0" y2="216" gradientUnits="userSpaceOnUse"><stop offset="0" stop-color="#f48600"/><stop offset="0.12" stop-color="#e07800"/><stop offset="0.45" stop-color="#c46600"/><stop offset="0.8" stop-color="#8a4600"/><stop offset="1" stop-color="#552a00"/></linearGradient>
<linearGradient id="gUnder" x1="0" y1="190" x2="0" y2="228" gradientUnits="userSpaceOnUse"><stop offset="0" stop-color="#2e2a28"/><stop offset="0.6" stop-color="#4e4846"/><stop offset="1" stop-color="#6c6462"/></linearGradient>
<linearGradient id="gBand" x1="0" y1="135" x2="0" y2="138.2" gradientUnits="userSpaceOnUse"><stop offset="0" stop-color="#ee8000" stop-opacity="0"/><stop offset="1" stop-color="#ee8000" stop-opacity="1"/></linearGradient>
<linearGradient id="gBandR" x1="0" y1="135" x2="0" y2="138.2" gradientUnits="userSpaceOnUse"><stop offset="0" stop-color="#d87400" stop-opacity="0"/><stop offset="1" stop-color="#d87400" stop-opacity="0.9"/></linearGradient>
<linearGradient id="gSdL" x1="98" y1="0" x2="118" y2="0" gradientUnits="userSpaceOnUse"><stop offset="0" stop-color="#0c0600"/><stop offset="0.3" stop-color="#2a1500"/><stop offset="0.65" stop-color="#3e2000"/><stop offset="1" stop-color="#2c1600"/></linearGradient>
<linearGradient id="gSdR" x1="413.2" y1="0" x2="393" y2="0" gradientUnits="userSpaceOnUse"><stop offset="0" stop-color="#060300"/><stop offset="0.4" stop-color="#160b00"/><stop offset="0.75" stop-color="#2e1700"/><stop offset="1" stop-color="#2a1500"/></linearGradient>
<linearGradient id="gSideL" x1="98" y1="0" x2="119" y2="0" gradientUnits="userSpaceOnUse"><stop offset="0" stop-color="#0a0500"/><stop offset="0.22" stop-color="#3a1c00"/><stop offset="0.45" stop-color="#b05a00"/><stop offset="0.75" stop-color="#ea7e00"/><stop offset="1" stop-color="#d87200"/></linearGradient>
<linearGradient id="gFend" x1="0" y1="103" x2="0" y2="143" gradientUnits="userSpaceOnUse"><stop offset="0" stop-color="#0c0600"/><stop offset="0.6" stop-color="#1e0f00"/><stop offset="0.82" stop-color="#3a1c00"/><stop offset="0.89" stop-color="#d06c00"/><stop offset="1" stop-color="#ee8000"/></linearGradient>
<linearGradient id="gFendXL" x1="98" y1="0" x2="150" y2="0" gradientUnits="userSpaceOnUse"><stop offset="0" stop-color="#0a0500" stop-opacity="0.95"/><stop offset="0.35" stop-color="#0a0500" stop-opacity="0.7"/><stop offset="1" stop-color="#0a0500" stop-opacity="0"/></linearGradient>
<linearGradient id="gFendXR" x1="413.2" y1="0" x2="355" y2="0" gradientUnits="userSpaceOnUse"><stop offset="0" stop-color="#0a0500" stop-opacity="0.97"/><stop offset="0.45" stop-color="#0a0500" stop-opacity="0.75"/><stop offset="1" stop-color="#0a0500" stop-opacity="0"/></linearGradient>
<linearGradient id="gSideR" x1="394" y1="0" x2="413" y2="0" gradientUnits="userSpaceOnUse"><stop offset="0" stop-color="#d87200"/><stop offset="0.2" stop-color="#a05200"/><stop offset="0.55" stop-color="#4a2400"/><stop offset="1" stop-color="#100800"/></linearGradient>
<linearGradient id="gApl" x1="0" y1="55" x2="0" y2="110" gradientUnits="userSpaceOnUse"><stop offset="0" stop-color="#6a3600"/><stop offset="0.5" stop-color="#9a5000"/><stop offset="1" stop-color="#c06400"/></linearGradient>
<linearGradient id="gFendD" x1="0" y1="140" x2="0" y2="160" gradientUnits="userSpaceOnUse"><stop offset="0" stop-color="#1a0d00" stop-opacity="0.95"/><stop offset="1" stop-color="#1a0d00" stop-opacity="0"/></linearGradient>
<linearGradient id="gRoofX" x1="150" y1="0" x2="361" y2="0" gradientUnits="userSpaceOnUse"><stop offset="0" stop-color="#000" stop-opacity="0.75"/><stop offset="0.3" stop-color="#000" stop-opacity="0.25"/><stop offset="0.6" stop-color="#000" stop-opacity="0"/><stop offset="0.85" stop-color="#000" stop-opacity="0.3"/><stop offset="1" stop-color="#000" stop-opacity="0.75"/></linearGradient>
<filter id="fBs" x="-50%" y="-50%" width="200%" height="200%"><feGaussianBlur stdDeviation="0.8"/></filter>
<pattern id="pMesh" x="191.2" y="150.1" width="2.42" height="5.4" patternUnits="userSpaceOnUse"><rect width="2.42" height="5.4" fill="#3a3a3a"/><rect x="0.3" width="0.7" height="5.4" fill="#9c9c9c"/></pattern>
<pattern id="pLamp" x="127" y="148.8" width="1.9" height="2.75" patternUnits="userSpaceOnUse"><rect width="1.9" height="2.75" fill="#acacac"/><rect width="0.5" height="2.75" fill="#969696"/><rect width="1.9" height="0.5" fill="#9a9a9a"/></pattern>
</defs>
<path d="M255.6,232.0 L238.0,231.6 L228.5,228.5 L223.0,224.4 L160.0,224.2 L131.7,224.2 L130.5,225.6 L123.1,226.8 L106.6,201.8 L103.6,188.3 L101.0,176.0 L410.2,176.0 L407.6,188.3 L404.6,201.8 L388.1,226.8 L380.7,225.6 L379.5,224.2 L351.2,224.2 L288.2,224.4 L282.7,228.5 L273.2,231.6 L255.6,232.0Z" fill="url(#gUnder)"/>
<path d="M255.6,216.0 L237.0,216.0 L234.3,221.5 L242.0,225.3 L255.6,225.6 L255.6,225.6 L269.2,225.3 L276.9,221.5 L274.2,216.0 L255.6,216.0Z" fill="#fff"/>
<path d="M127.5,210.5 L143.0,213.5 L152.0,216.0 L134.0,224.0 L131.5,224.0Z" fill="#4a4442"/>
<path d="M152.5,215.0 L223.5,215.5 L224.5,220.8 L196.0,220.8 L180.0,220.6 L176.0,222.8 L160.0,222.8 L166.0,219.2 L152.5,219.2Z" fill="#0c0a0a"/><path d="M358.7,219.2 L345.2,219.2 L351.2,222.8 L335.2,222.8 L331.2,220.6 L315.2,220.8 L286.7,220.8 L287.7,215.5 L358.7,215.0Z" fill="#0c0a0a"/>
<path d="M255.6,41.3 L214.0,42.2 L183.0,44.0 L168.5,46.1 L158.2,49.6 L153.0,53.8 L149.3,54.9 L144.4,65.9 L138.3,78.1 L132.2,90.3 L127.9,100.1 L126.7,103.8 L125.5,104.0 L115.7,106.7 L106.4,109.4 L104.3,114.5 L100.2,131.0 L98.2,141.0 L99.0,150.0 L100.2,170.0 L103.6,176.0 L107.2,194.4 L114.6,206.7 L123.7,214.6 L126.2,209.1 L143.9,211.0 L150.0,213.2 L155.0,213.8 L160.0,213.0 L165.0,210.5 L173.2,212.2 L195.0,214.6 L230.0,215.2 L255.6,215.6 L255.6,215.6 L281.2,215.2 L316.2,214.6 L338.0,212.2 L346.2,210.5 L351.2,213.0 L356.2,213.8 L361.2,213.2 L367.3,211.0 L385.0,209.1 L387.5,214.6 L396.6,206.7 L404.0,194.4 L407.6,176.0 L411.0,170.0 L412.2,150.0 L413.0,141.0 L411.0,131.0 L406.9,114.5 L404.8,109.4 L395.5,106.7 L385.7,104.0 L384.5,103.8 L384.1,100.1 L379.8,90.3 L373.7,78.1 L367.6,65.9 L361.9,54.9 L358.2,53.8 L353.0,49.6 L342.7,46.1 L328.2,44.0 L297.2,42.2 L255.6,41.3Z" fill="url(#gBody)"/>
<path d="M255.6,42.3 L214.0,43.2 L183.0,45.0 L169.0,47.2 L159.5,50.5 L155.5,54.5 L200.0,52.4 L255.6,51.5 L255.6,51.5 L311.2,52.4 L355.7,54.5 L351.7,50.5 L342.2,47.2 L328.2,45.0 L297.2,43.2 L255.6,42.3Z" fill="url(#gRoof)"/>
<path d="M255.6,42.3 L214.0,43.2 L183.0,45.0 L169.0,47.2 L159.5,50.5 L155.5,54.5 L200.0,52.4 L255.6,51.5 L255.6,51.5 L311.2,52.4 L355.7,54.5 L351.7,50.5 L342.2,47.2 L328.2,45.0 L297.2,43.2 L255.6,42.3Z" fill="url(#gRoofX)"/>
<path d="M150.8,56.6 L154.8,54.6 L133.0,109.8 L128.0,111.0 L129.2,108.7 L135.9,89.1 L143.2,72.0Z" fill="url(#gApl)"/><path d="M368.0,72.0 L375.3,89.1 L382.0,108.7 L383.2,111.0 L378.2,109.8 L356.4,54.6 L360.4,56.6Z" fill="url(#gApl)"/>
<path d="M255.6,108.6 L226.0,109.0 L133.0,110.2 L128.5,111.2 L126.9,104.2 L125.5,104.6 L116.0,107.4 L107.2,110.0 L105.2,114.5 L101.1,131.0 L99.2,141.0 L100.0,150.0 L101.0,168.0 L104.0,175.0 L108.0,180.0 L112.0,181.0 L116.0,178.0 L118.0,172.0 L116.5,160.0 L117.0,150.0 L118.0,146.0 L124.0,143.5 L152.0,141.4 L200.0,140.6 L255.6,140.3 L255.6,140.3 L311.2,140.6 L359.2,141.4 L387.2,143.5 L393.2,146.0 L394.2,150.0 L394.7,160.0 L393.2,172.0 L395.2,178.0 L399.2,181.0 L403.2,180.0 L407.2,175.0 L410.2,168.0 L411.2,150.0 L412.0,141.0 L410.1,131.0 L406.0,114.5 L404.0,110.0 L395.2,107.4 L385.7,104.6 L384.3,104.2 L382.7,111.2 L378.2,110.2 L285.2,109.0 L255.6,108.6Z" fill="url(#gHood)"/>
<path d="M128.5,111.2 L126.9,104.2 L125.5,104.6 L116.0,107.4 L107.2,110.0 L105.2,114.5 L101.1,131.0 L99.2,141.0 L99.8,146.0 L118.0,146.0 L124.0,143.5 L152.0,141.4 L149.0,130.0 L146.8,112.6Z" fill="url(#gHood)"/><path d="M364.4,112.6 L362.2,130.0 L359.2,141.4 L387.2,143.5 L393.2,146.0 L411.4,146.0 L412.0,141.0 L410.1,131.0 L406.0,114.5 L404.0,110.0 L395.2,107.4 L385.7,104.6 L384.3,104.2 L382.7,111.2Z" fill="url(#gHood)"/>
<path d="M128.5,111.2 L126.9,104.2 L125.5,104.6 L116.0,107.4 L107.2,110.0 L105.2,114.5 L101.1,131.0 L99.2,141.0 L99.8,146.0 L118.0,146.0 L124.0,143.5 L152.0,141.4 L149.0,130.0 L146.8,112.6Z" fill="url(#gFendXL)"/><path d="M364.4,112.6 L362.2,130.0 L359.2,141.4 L387.2,143.5 L393.2,146.0 L411.4,146.0 L412.0,141.0 L410.1,131.0 L406.0,114.5 L404.0,110.0 L395.2,107.4 L385.7,104.6 L384.3,104.2 L382.7,111.2Z" fill="url(#gFendXR)"/>
<clipPath id="cBody"><path d="M255.6,41.3 L214.0,42.2 L183.0,44.0 L168.5,46.1 L158.2,49.6 L153.0,53.8 L149.3,54.9 L144.4,65.9 L138.3,78.1 L132.2,90.3 L127.9,100.1 L126.7,103.8 L125.5,104.0 L115.7,106.7 L106.4,109.4 L104.3,114.5 L100.2,131.0 L98.2,141.0 L99.0,150.0 L100.2,170.0 L103.6,176.0 L107.2,194.4 L114.6,206.7 L123.7,214.6 L126.2,209.1 L143.9,211.0 L150.0,213.2 L155.0,213.8 L160.0,213.0 L165.0,210.5 L173.2,212.2 L195.0,214.6 L230.0,215.2 L255.6,215.6 L255.6,215.6 L281.2,215.2 L316.2,214.6 L338.0,212.2 L346.2,210.5 L351.2,213.0 L356.2,213.8 L361.2,213.2 L367.3,211.0 L385.0,209.1 L387.5,214.6 L396.6,206.7 L404.0,194.4 L407.6,176.0 L411.0,170.0 L412.2,150.0 L413.0,141.0 L411.0,131.0 L406.9,114.5 L404.8,109.4 L395.5,106.7 L385.7,104.0 L384.5,103.8 L384.1,100.1 L379.8,90.3 L373.7,78.1 L367.6,65.9 L361.9,54.9 L358.2,53.8 L353.0,49.6 L342.7,46.1 L328.2,44.0 L297.2,42.2 L255.6,41.3Z"/></clipPath>
<g clip-path="url(#cBody)">
<path d="M97.0,133.0 L110.0,134.5 L114.0,138.0 L115.5,143.0 L117.0,146.0 L118.5,153.0 L118.5,172.0 L116.0,177.5 L110.5,179.5 L109.5,184.0 L110.5,192.0 L117.0,194.0 L107.0,196.0 L103.0,178.0 L99.0,172.0 L97.0,150.0Z" fill="url(#gSdL)"/><path d="M414.2,150.0 L412.2,172.0 L408.2,178.0 L404.2,196.0 L394.2,194.0 L400.7,192.0 L401.7,184.0 L400.7,179.5 L395.2,177.5 L392.7,172.0 L392.7,153.0 L394.2,146.0 L395.7,143.0 L397.2,138.0 L401.2,134.5 L414.2,133.0Z" fill="url(#gSdR)"/>
<path d="M116.5,135.2 L153.0,134.6 L153.0,142.0 L126.0,143.4 L119.0,145.0 L116.0,146.0Z" fill="url(#gBand)"/><path d="M395.2,146.0 L392.2,145.0 L385.2,143.4 L358.2,142.0 L358.2,134.6 L394.7,135.2Z" fill="url(#gBandR)"/>
<g filter="url(#fBs)"><path d="M127,140.6 Q118.5,141.2 116.6,146.5 Q115.4,158 115.9,169 Q116.3,173.8 118.8,175.8" fill="none" stroke="#8a4600" stroke-width="5.5" opacity="0.75"/><path d="M384.2,140.6 Q392.7,141.2 394.6,146.5 Q395.79999999999995,158 395.29999999999995,169 Q394.9,173.8 392.4,175.8" fill="none" stroke="#6a3600" stroke-width="4.5" opacity="0.7"/></g>
<path d="M127,140.6 Q118.5,141.2 116.6,146.5 Q115.4,158 115.9,169 Q116.3,173.8 118.8,175.8" fill="none" stroke="#f08200" stroke-width="2.7" stroke-linecap="round"/><path d="M384.2,140.6 Q392.7,141.2 394.6,146.5 Q395.79999999999995,158 395.29999999999995,169 Q394.9,173.8 392.4,175.8" fill="none" stroke="#dc7600" stroke-width="2.2" stroke-linecap="round"/>
<rect x="108.3" y="180.6" width="1.5" height="3.6" fill="#c06400" transform="rotate(-12 109 182)"/>
<rect x="401.4" y="180.6" width="1.5" height="3.6" fill="#9a5000" transform="rotate(12 402.2 182)"/>
</g>
<path d="M146.8,112.6 L149.0,130.0 L152.0,141.4" fill="none" stroke="#1a0c00" stroke-width="0.6"/><path d="M359.2,141.4 L362.2,130.0 L364.4,112.6" fill="none" stroke="#1a0c00" stroke-width="0.6"/>
<path d="M154.0,117.0 L227.7,115.0 L226.0,118.5 L223.0,121.5 L160.0,124.5 L156.6,121.5Z" fill="#1e0f00" opacity="0.6"/><path d="M354.6,121.5 L351.2,124.5 L288.2,121.5 L285.2,118.5 L283.5,115.0 L357.2,117.0Z" fill="#1e0f00" opacity="0.6"/>
<path d="M158.0,122.5 L223.0,119.5 L222.5,121.5 L160.0,124.5Z" fill="#5a2e00" opacity="0.6"/><path d="M351.2,124.5 L288.7,121.5 L288.2,119.5 L353.2,122.5Z" fill="#5a2e00" opacity="0.6"/>
<path d="M255.6,51.9 L200.0,52.9 L157.0,54.4 L154.8,54.9 L132.9,109.8 L226.0,108.8 L255.6,108.4 L255.6,108.4 L285.2,108.8 L378.3,109.8 L356.4,54.9 L354.2,54.4 L311.2,52.9 L255.6,51.9Z" fill="#141414"/>
<line x1="228.9" y1="110.5" x2="282.4" y2="110.5" stroke="#d87400" stroke-width="1" stroke-dasharray="2.6 2.05"/>
<circle cx="255.6" cy="131.7" r="2.6" fill="#c87418" opacity="0.55" filter="url(#fBs)"/><circle cx="255.6" cy="136.6" r="0.75" fill="#000"/>
<path d="M255.6,141.6 L200.0,141.9 L152.0,142.8 L127.0,143.0 L121.5,144.2 L118.6,147.0 L117.6,152.0 L117.6,171.0 L118.5,175.0 L120.0,177.0 L110.8,177.6 L110.4,184.0 L110.6,192.6 L117.6,193.6 L171.4,193.2 L175.7,198.7 L195.0,200.0 L255.6,200.5 L255.6,200.5 L316.2,200.0 L335.5,198.7 L339.8,193.2 L393.6,193.6 L400.6,192.6 L400.8,184.0 L400.4,177.6 L391.2,177.0 L392.7,175.0 L393.6,171.0 L393.6,152.0 L392.6,147.0 L389.7,144.2 L384.2,143.0 L359.2,142.8 L311.2,141.9 L255.6,141.6Z" fill="#000"/>
<path d="M127,151 L190.4,148.9 L190.4,170.8 L127,170.6 Z" fill="url(#pLamp)"/>
<path d="M384.2,151 L320.79999999999995,148.9 L320.79999999999995,170.8 L384.2,170.6 Z" fill="url(#pLamp)"/>
<rect x="191.2" y="147.9" width="48.7" height="23" fill="url(#pMesh)"/>
<rect x="271.29999999999995" y="147.9" width="48.7" height="23" fill="url(#pMesh)"/>
<path d="M191,155.4 L240.6,155.4 M270.6,155.4 L320.2,155.4" stroke="#8e8e8e" stroke-width="0.6"/>
<path d="M191,160.9 L240.6,160.9 M270.6,160.9 L320.2,160.9" stroke="#8e8e8e" stroke-width="0.6"/>
<path d="M191,166.2 L240.6,166.2 M270.6,166.2 L320.2,166.2" stroke="#8e8e8e" stroke-width="0.6"/>
<path d="M255.6,189.0 L246.0,189.6 L239.0,192.0 L227.8,200.6 L255.6,200.6 L255.6,200.6 L283.4,200.6 L272.2,192.0 L265.2,189.6 L255.6,189.0Z" fill="#5a5452"/>
<path d="M228.6,200.6 L232.0,198.0 L249.5,197.6 L243.0,200.6Z" fill="#fff"/><path d="M268.2,200.6 L261.7,197.6 L279.2,198.0 L282.6,200.6Z" fill="#fff"/>
<path d="M255.6,196.8 L249.5,197.6 L243.0,200.6 L255.6,200.6 L255.6,200.6 L268.2,200.6 L261.7,197.6 L255.6,196.8Z" fill="#0a0a0a"/>
<path d="M255.6,200.5 L195.0,200.0 L175.7,198.7 L171.4,193.2 L119.0,193.6 L116.8,195.0 L116.0,197.5 L119.0,203.5 L124.3,214.6 L126.2,209.1 L143.9,211.0 L150.0,213.2 L155.0,213.8 L160.0,213.0 L165.0,210.5 L173.2,212.2 L195.0,214.6 L230.0,215.2 L255.6,215.6 L255.6,215.6 L281.2,215.2 L316.2,214.6 L338.0,212.2 L346.2,210.5 L351.2,213.0 L356.2,213.8 L361.2,213.2 L367.3,211.0 L385.0,209.1 L386.9,214.6 L392.2,203.5 L395.2,197.5 L394.4,195.0 L392.2,193.6 L339.8,193.2 L335.5,198.7 L316.2,200.0 L255.6,200.5Z" fill="url(#gBump)"/>
<circle cx="154.9" cy="203" r="7.2" fill="#c87a1c" stroke="#5a2e00" stroke-width="0.7"/>
<circle cx="356.3" cy="203" r="7.2" fill="#c87a1c" stroke="#5a2e00" stroke-width="0.7"/>
</svg>
<svg width="1024" height="532" viewBox="0 0 1024 532">
<defs><clipPath id="cTop"><path d="M685.6,47.0 L688.0,46.6 L748.0,46.6 L751.0,47.0 L753.7,76.0 L754.7,117.6 L754.4,140.0 L755.1,181.3 L754.7,212.3 L752.6,240.8 L750.0,241.4 L688.0,241.2 L685.5,240.5 L682.8,212.3 L681.4,181.3 L682.4,140.0 L682.0,117.6 L682.8,86.7Z"/></clipPath><linearGradient id="gTop" x1="681" y1="0" x2="756" y2="0" gradientUnits="userSpaceOnUse"><stop offset="0" stop-color="#b05c00"/><stop offset="0.14" stop-color="#e07800"/><stop offset="0.3" stop-color="#f28400"/><stop offset="0.7" stop-color="#f28400"/><stop offset="0.86" stop-color="#e07800"/><stop offset="1" stop-color="#b05c00"/></linearGradient></defs>
<path d="M685.6,47.0 L688.0,46.6 L748.0,46.6 L751.0,47.0 L753.7,76.0 L754.7,117.6 L754.4,140.0 L755.1,181.3 L754.7,212.3 L752.6,240.8 L750.0,241.4 L688.0,241.2 L685.5,240.5 L682.8,212.3 L681.4,181.3 L682.4,140.0 L682.0,117.6 L682.8,86.7Z" fill="url(#gTop)"/>
<g clip-path="url(#cTop)">
<path d="M684,46 L684,242 M693,46 L693,242 M701.2,46 L701.2,242 M709.4,46 L709.4,242 M718.4,46 L718.4,242 M727.4,46 L727.4,242 M735.9,46 L735.9,242 M743.8,46 L743.8,242 M753,46 L753,242 M681,49.6 L756,49.6 M681,52.2 L756,52.2 M681,58.6 L756,58.6 M681,60.3 L756,60.3 M681,69.9 L756,69.9 M681,76.6 L756,76.6 M681,86.2 L756,86.2 M681,95 L756,95 M681,104 L756,104 M681,112 L756,112 M681,120 L756,120 M681,128 L756,128 M681,136 L756,136 M681,144 L756,144 M681,152 L756,152 M681,160 L756,160 M681,166 L756,166 M681,172 L756,172 M681,178 L756,178 M681,184 L756,184 M681,190 L756,190 M681,197 L756,197 M681,204 L756,204 M681,211 L756,211 M681,218 L756,218 M681,225 L756,225 M681,232 L756,232 M681,237 L756,237 M684,47 L693,52.2 M693,47 L701.2,52.2 M701.2,47 L709.4,52.2 M709.4,47 L718.4,52.2 M727.4,47 L718.4,52.2 M735.9,47 L727.4,52.2 M743.8,47 L735.9,52.2 M753,47 L743.8,52.2 M684,52.2 L693,60.3 M693,52.2 L701.2,60.3 M701.2,52.2 L709.4,60.3 M709.4,52.2 L718.4,60.3 M727.4,52.2 L718.4,60.3 M735.9,52.2 L727.4,60.3 M743.8,52.2 L735.9,60.3 M753,52.2 L743.8,60.3 M684,60.3 L693,69.9 M693,60.3 L701.2,69.9 M701.2,60.3 L709.4,69.9 M709.4,60.3 L718.4,69.9 M727.4,60.3 L718.4,69.9 M735.9,60.3 L727.4,69.9 M743.8,60.3 L735.9,69.9 M753,60.3 L743.8,69.9 M684,69.9 L693,76.6 M693,69.9 L701.2,76.6 M701.2,69.9 L709.4,76.6 M709.4,69.9 L718.4,76.6 M727.4,69.9 L718.4,76.6 M735.9,69.9 L727.4,76.6 M743.8,69.9 L735.9,76.6 M753,69.9 L743.8,76.6 M684,76.6 L693,86.2 M693,76.6 L701.2,86.2 M701.2,76.6 L709.4,86.2 M709.4,76.6 L718.4,86.2 M727.4,76.6 L718.4,86.2 M735.9,76.6 L727.4,86.2 M743.8,76.6 L735.9,86.2 M753,76.6 L743.8,86.2 M684,86.2 L693,95 M693,86.2 L701.2,95 M701.2,86.2 L709.4,95 M709.4,86.2 L718.4,95 M727.4,86.2 L718.4,95 M735.9,86.2 L727.4,95 M743.8,86.2 L735.9,95 M753,86.2 L743.8,95 M684,95 L693,104 M693,95 L701.2,104 M701.2,95 L709.4,104 M709.4,95 L718.4,104 M727.4,95 L718.4,104 M735.9,95 L727.4,104 M743.8,95 L735.9,104 M753,95 L743.8,104 M684,104 L693,120 M693,104 L701.2,120 M701.2,104 L709.4,120 M709.4,104 L718.4,120 M727.4,104 L718.4,120 M735.9,104 L727.4,120 M743.8,104 L735.9,120 M753,104 L743.8,120 M684,120 L693,136 M693,120 L701.2,136 M701.2,120 L709.4,136 M709.4,120 L718.4,136 M727.4,120 L718.4,136 M735.9,120 L727.4,136 M743.8,120 L735.9,136 M753,120 L743.8,136 M684,136 L693,152 M693,136 L701.2,152 M701.2,136 L709.4,152 M709.4,136 L718.4,152 M727.4,136 L718.4,152 M735.9,136 L727.4,152 M743.8,136 L735.9,152 M753,136 L743.8,152 M684,152 L693,166 M693,152 L701.2,166 M701.2,152 L709.4,166 M709.4,152 L718.4,166 M727.4,152 L718.4,166 M735.9,152 L727.4,166 M743.8,152 L735.9,166 M753,152 L743.8,166 M684,166 L693,184 M693,166 L701.2,184 M701.2,166 L709.4,184 M709.4,166 L718.4,184 M727.4,166 L718.4,184 M735.9,166 L727.4,184 M743.8,166 L735.9,184 M753,166 L743.8,184 M684,184 L693,197 M693,184 L701.2,197 M701.2,184 L709.4,197 M709.4,184 L718.4,197 M727.4,184 L718.4,197 M735.9,184 L727.4,197 M743.8,184 L735.9,197 M753,184 L743.8,197 M684,197 L693,211 M693,197 L701.2,211 M701.2,197 L709.4,211 M709.4,197 L718.4,211 M727.4,197 L718.4,211 M735.9,197 L727.4,211 M743.8,197 L735.9,211 M753,197 L743.8,211 M684,211 L693,225 M693,211 L701.2,225 M701.2,211 L709.4,225 M709.4,211 L718.4,225 M727.4,211 L718.4,225 M735.9,211 L727.4,225 M743.8,211 L735.9,225 M753,211 L743.8,225 M684,225 L693,241 M693,225 L701.2,241 M701.2,225 L709.4,241 M709.4,225 L718.4,241 M727.4,225 L718.4,241 M735.9,225 L727.4,241 M743.8,225 L735.9,241 M753,225 L743.8,241" fill="none" stroke="#2a1200" stroke-width="0.42" opacity="0.52"/>
<path d="M686.3,46 L686.3,242 M688.6,46 L688.6,242 M690.8,46 L690.8,242 M746,46 L746,242 M748.3,46 L748.3,242 M750.6,46 L750.6,242" fill="none" stroke="#2a1200" stroke-width="0.4" opacity="0.5"/>
<rect x="681" y="46" width="8" height="196" fill="#3a1a00" opacity="0.35"/><rect x="748.5" y="46" width="8" height="196" fill="#3a1a00" opacity="0.35"/>
</g>
<path d="M693.6,70.4 L697.3,88.5 L691.5,108.0" fill="none" stroke="#2a1200" stroke-width="0.8" opacity="0.8"/>
<path d="M744.3,70.4 L740.6,88.5 L746.0,108.0" fill="none" stroke="#2a1200" stroke-width="0.8" opacity="0.8"/>
<path d="M693.5,186.0 L697.0,240.0" fill="none" stroke="#2a1200" stroke-width="0.8" opacity="0.8"/>
<path d="M743.5,186.0 L740.0,240.0" fill="none" stroke="#2a1200" stroke-width="0.8" opacity="0.8"/>
<path d="M718.4,196.0 L718.4,241.0" fill="none" stroke="#2a1200" stroke-width="0.8" opacity="0.8"/>
<path d="M706.0,200.0 L707.5,224.0 L716.0,226.0" fill="none" stroke="#2a1200" stroke-width="0.8" opacity="0.8"/>
<path d="M731.0,200.0 L729.5,224.0 L721.0,226.0" fill="none" stroke="#2a1200" stroke-width="0.8" opacity="0.8"/>
<path d="M689.0,182.0 L697.0,184.5 L740.0,184.5 L748.0,182.0" fill="none" stroke="#2a1200" stroke-width="0.8" opacity="0.8"/>
<path d="M697,88.6 L740.6,88.6 L739.2,99.5 Q738.5,103.3 734.5,103.6 L703,104.2 Q699.3,104 698.6,100.5 Z" fill="#1f1f1f"/>
<path d="M690.3,109.6 L691.4,113.5 L693,120 L694.1,139.5 L695.8,160.5 L689.4,162.5 L688.5,140 L688.2,118 Z" fill="#1c1c1c"/>
<path d="M746.5,109.6 L745.4,113.5 L743.8,120 L742.7,139.5 L741,160.5 L747.4,162.5 L748.3,140 L748.6,118 Z" fill="#1c1c1c"/>
<path d="M689.4,161 Q692,159.6 695.8,159.4 Q706,163.6 718.4,163.6 Q731,163.6 741,159.4 Q745,159.6 747.4,161 L748.3,171 Q747.5,176.5 743,179 Q738,180.8 734,180.8 L703,180.8 Q698,180.6 694,178.6 Q689.8,176 689.2,171 Z" fill="#1c1c1c"/>
<circle cx="747" cy="71.8" r="2.8" fill="#0a0a0a"/>
<rect x="712.4" y="183.4" width="11.8" height="3.6" fill="#2c1c0c"/>
<path d="M685.6,47.0 L688.0,46.6 L748.0,46.6 L751.0,47.0 L753.7,76.0 L754.7,117.6 L754.4,140.0 L755.1,181.3 L754.7,212.3 L752.6,240.8 L750.0,241.4 L688.0,241.2 L685.5,240.5 L682.8,212.3 L681.4,181.3 L682.4,140.0 L682.0,117.6 L682.8,86.7Z" fill="none" stroke="#160a00" stroke-width="1.1"/>
</svg>
<svg width="1024" height="532" viewBox="0 0 1024 532">
<defs>
<linearGradient id="gP" x1="640" y1="360" x2="700" y2="480" gradientUnits="userSpaceOnUse"><stop offset="0" stop-color="#b86000"/><stop offset="0.35" stop-color="#d06c02"/><stop offset="0.7" stop-color="#c46400"/><stop offset="1" stop-color="#a85400"/></linearGradient>
<linearGradient id="gPside" x1="709" y1="416" x2="728" y2="457" gradientUnits="userSpaceOnUse"><stop offset="0" stop-color="#c86802"/><stop offset="0.35" stop-color="#be6100"/><stop offset="0.75" stop-color="#a25200"/><stop offset="1" stop-color="#7a3c00"/></linearGradient>
<linearGradient id="gProof" x1="700" y1="352" x2="730" y2="392" gradientUnits="userSpaceOnUse"><stop offset="0" stop-color="#7e4200"/><stop offset="0.22" stop-color="#a85800"/><stop offset="0.5" stop-color="#c86a04"/><stop offset="0.75" stop-color="#d07008"/><stop offset="1" stop-color="#c46602"/></linearGradient>
<linearGradient id="gPsc" x1="0" y1="0" x2="1" y2="1"><stop offset="0" stop-color="#7a3c00"/><stop offset="1" stop-color="#c06400"/></linearGradient>
<linearGradient id="gPtrunk" x1="800" y1="376" x2="789" y2="340" gradientUnits="userSpaceOnUse"><stop offset="0" stop-color="#d47208"/><stop offset="0.4" stop-color="#cc6a04"/><stop offset="0.72" stop-color="#c06200"/><stop offset="1" stop-color="#a05200"/></linearGradient>
<linearGradient id="gPrs" x1="800" y1="376" x2="807" y2="400" gradientUnits="userSpaceOnUse"><stop offset="0" stop-color="#b45c00"/><stop offset="0.08" stop-color="#8e4800"/><stop offset="0.35" stop-color="#a85600"/><stop offset="0.6" stop-color="#b86000"/><stop offset="0.85" stop-color="#9e5000"/><stop offset="1" stop-color="#7e4000"/></linearGradient>
<filter id="fB2" x="-20%" y="-20%" width="140%" height="140%"><feGaussianBlur stdDeviation="0.6"/></filter>
<filter id="fB" x="-20%" y="-20%" width="140%" height="140%"><feGaussianBlur stdDeviation="1.1"/></filter>
</defs>
<path d="M566.1,423.4 L575.0,418.3 L586.6,411.8 L605.0,403.5 L623.3,395.9 L640.0,390.0 L657.5,384.9 L659.0,384.0 L680.4,364.3 L683.8,362.0 L700.7,356.0 L717.6,351.5 L734.6,348.8 L744.7,348.8 L754.9,351.0 L758.2,351.5 L761.6,349.3 L771.8,347.6 L779.0,348.6 L788.0,352.5 L799.9,357.0 L812.0,361.0 L825.6,365.5 L829.5,367.5 L830.6,369.4 L830.5,373.0 L829.2,376.5 L826.8,380.2 L822.0,385.0 L812.1,393.6 L806.5,398.2 L804.6,398.4 L803.6,393.6 L799.0,393.0 L795.0,394.8 L791.0,399.5 L787.7,405.8 L785.5,411.0 L782.8,415.6 L760.0,427.0 L740.0,437.0 L714.4,449.8 L700.0,457.0 L696.6,460.6 L694.8,463.2 L693.3,463.0 L691.3,458.4 L687.4,456.4 L679.5,457.8 L669.0,462.4 L659.7,469.0 L653.2,476.8 L650.5,483.4 L647.9,485.4 L633.4,489.3 L621.6,494.0 L620.1,494.6 L617.5,496.6 L611.1,499.3 L607.7,496.9 L603.2,490.1 L591.9,477.7 L586.0,469.5 L581.8,462.5 L578.0,455.0 L575.0,448.4 L567.5,433.2 L565.4,426.0Z" fill="url(#gP)"/>
<path d="M758.2,351.5 L761.6,349.3 L771.8,347.6 L779.0,348.6 L788.0,352.5 L799.9,357.0 L812.0,361.0 L825.6,365.5 L829.5,367.5 L815.0,372.0 L800.0,377.0 L781.6,381.4 L781.1,379.7Z" fill="url(#gPtrunk)"/>
<path d="M781.6,381.4 L800.0,377.0 L815.0,372.0 L829.5,367.5 L830.6,369.4 L830.5,373.0 L829.2,376.5 L826.8,380.2 L822.0,385.0 L812.1,393.6 L806.5,398.2 L804.6,398.4 L803.6,393.6 L799.0,393.0 L795.0,394.8 L791.0,399.5 L787.7,405.8 L785.5,411.0 L782.8,415.6 L768.4,412.7 L766.7,395.8Z" fill="url(#gPrs)"/>
<path d="M603.0,470.0 L650.0,450.0 L710.0,418.5 L716.0,413.5 L729.5,407.3 L759.9,396.0 L766.7,395.8 L768.4,412.7 L782.8,415.6 L760.0,427.0 L740.0,437.0 L714.4,449.8 L700.0,457.0 L696.6,460.6 L694.8,463.2 L693.3,463.0 L691.3,458.4 L687.4,456.4 L679.5,457.8 L669.0,462.4 L659.7,469.0 L653.2,476.8 L650.5,483.4 L647.9,485.4 L633.4,489.3 L621.6,494.0 L619.6,495.3 L617.5,496.6 L611.1,499.3 L607.7,492.4 L606.6,483.3Z" fill="url(#gPside)"/>
<path d="M680.4,364.3 L683.8,362.0 L700.7,356.0 L717.6,351.5 L734.6,348.8 L744.7,348.8 L754.9,351.0 L758.2,351.5 L781.1,379.7 L761.6,375.2 L755.7,375.5 L725.8,388.2 L722.4,386.5 L700.7,378.0 L688.9,371.3Z" fill="url(#gProof)"/>
<path d="M566.1,423.4 L575.0,418.3 L586.6,411.8 L605.0,403.5 L623.3,395.9 L640.0,390.0 L657.5,384.9 L658.5,384.8 L675.4,402.6 L695.7,413.6 L709.2,417.5 L650.0,450.0 L603.0,470.0 L587.1,460.0 L581.8,445.7 L570.2,429.6Z" fill="#cc6a02"/>
<path d="M566.5,424 L581,444.5 L617.5,433 L640,421 L660,407 L640,390 L605,403.5 Z" fill="#c06200" opacity="0.55"/>
<path d="M581.8,445.7 L587.1,460 L603,470 L650,450 L690,428 L676,404 L650,424 L617.5,433.2 Z" fill="#d87408" opacity="0.45"/>
<defs><linearGradient id="gSc1" x1="602" y1="415" x2="646" y2="405" gradientUnits="userSpaceOnUse"><stop offset="0" stop-color="#7e4000" stop-opacity="0.8"/><stop offset="0.3" stop-color="#8a4600" stop-opacity="0.6"/><stop offset="0.6" stop-color="#9a5000" stop-opacity="0.4"/><stop offset="1" stop-color="#a85600" stop-opacity="0"/></linearGradient><linearGradient id="gSc2" x1="619" y1="438" x2="667" y2="428" gradientUnits="userSpaceOnUse"><stop offset="0" stop-color="#7e4000" stop-opacity="0.8"/><stop offset="0.3" stop-color="#8a4600" stop-opacity="0.6"/><stop offset="0.6" stop-color="#9a5000" stop-opacity="0.4"/><stop offset="1" stop-color="#a85600" stop-opacity="0"/></linearGradient></defs>
<g filter="url(#fB2)"><path d="M602.3,412.6 L623,405.8 L645,402.5 L646,407 L624,416.5 L609.8,422 Z" fill="url(#gSc1)"/><path d="M619.2,435.2 L640.8,425.8 L666,426 L667,431.5 L648.3,439 L633.3,446.4 Z" fill="url(#gSc2)"/></g>
<g fill="none" stroke="#6a3400" stroke-width="0.6" opacity="0.5"><path d="M581.6,443.6 L612,433 L650.2,415.4"/><path d="M603,470 L650,449 L689.7,423"/><path d="M648.3,389.1 Q656,398 665.3,405 Q676,413.5 687.8,419.2 L706.6,423"/><path d="M575,418.5 L590,437"/></g>
<path d="M567,423.8 L586.6,412.6 L623.3,396.7 L657,385.6" fill="none" stroke="#e08418" stroke-width="0.9" opacity="0.6"/>
<path d="M566.1,423.4 L566.6,424.3 L570.2,429.6 L578.4,445.0 L586.3,459.7 L603.2,477.7 L606.6,483.3 L607.7,492.4 L613.3,492.9 L616.7,491.8 L620.1,494.6 L617.5,496.6 L611.1,499.3 L607.7,496.9 L603.2,490.1 L591.9,477.7 L586.0,469.5 L581.8,462.5 L578.0,455.0 L575.0,448.4 L567.5,433.2 L565.4,426.0Z" fill="#050505"/>
<path d="M587.2,461.4 L602.3,478.2 M603.8,480.4 L604.8,482" stroke="#f2f2f2" stroke-width="1.1" fill="none"/><circle cx="611.6" cy="493.8" r="0.6" fill="#eee"/>
<rect x="634.6" y="483.6" width="6.2" height="1.7" fill="#f4ece4" transform="rotate(-10 637.5 484.4)"/>
<path d="M692,460.5 L693.3,463.2 L694.8,463.4 L696.4,460.8 L694.6,461.6 Z" fill="#080808"/><path d="M802.8,393.4 L806.4,392.8 L806.8,398 L803.4,398.5 Z" fill="#0c0c0c"/><path d="M828.6,376 L830.4,373.5 L831.2,375 L829,379.4 L827.6,379 Z" fill="#0c0c0c"/>
<path d="M680.4,365 L658.5,384.8 Q666,394.5 675.4,402.6 Q686,409.5 695.7,413.6 L709.2,417.2 L710.5,416.1 L722.4,386.5 Q711,382 700.7,378 Q693,374.5 688.9,371.3 Z" fill="#0e0e0e"/>
<path d="M725.8,388.2 L755.7,375.5 L761.6,375.2 L781.1,379.7 L781.6,381.4 L759.9,395.5 L729.5,406.8 L716,413 Z" fill="#0e0e0e"/>
<path d="M756.9,375.3 L757.3,396" stroke="#9a5000" stroke-width="0.9" fill="none"/><path d="M727.6,388 L728.6,406.5" stroke="#3a2410" stroke-width="0.5" fill="none"/>
<path d="M722.4,386.5 L725.6,387.4 L715.3,414.2 L710.5,417.8 Z" fill="#d87408"/>
<path d="M766.7,395.8 Q768.8,404 768.4,412.7 Q767.5,420 764.5,424.5" stroke="#5a2c00" stroke-width="0.5" fill="none"/>
<path d="M710.8,419 Q712.8,435 713.5,450" stroke="#5a2c00" stroke-width="0.5" fill="none"/>
<path d="M566.1,423.4 L575.0,418.3 L586.6,411.8 L605.0,403.5 L623.3,395.9 L640.0,390.0 L657.5,384.9 L659.0,384.0 L680.4,364.3 L683.8,362.0 L700.7,356.0 L717.6,351.5 L734.6,348.8 L744.7,348.8 L754.9,351.0 L758.2,351.5 L761.6,349.3 L771.8,347.6 L779.0,348.6 L788.0,352.5 L799.9,357.0 L812.0,361.0 L825.6,365.5 L829.5,367.5 L830.6,369.4 L830.5,373.0 L829.2,376.5 L826.8,380.2 L822.0,385.0 L812.1,393.6 L806.5,398.2 L804.6,398.4 L803.6,393.6 L799.0,393.0 L795.0,394.8 L791.0,399.5 L787.7,405.8 L785.5,411.0 L782.8,415.6 L760.0,427.0 L740.0,437.0 L714.4,449.8 L700.0,457.0 L696.6,460.6 L694.8,463.2 L693.3,463.0 L691.3,458.4 L687.4,456.4 L679.5,457.8 L669.0,462.4 L659.7,469.0 L653.2,476.8 L650.5,483.4 L647.9,485.4 L633.4,489.3 L621.6,494.0 L620.1,494.6 L617.5,496.6 L611.1,499.3 L607.7,496.9 L603.2,490.1 L591.9,477.7 L586.0,469.5 L581.8,462.5 L578.0,455.0 L575.0,448.4 L567.5,433.2 L565.4,426.0Z" fill="none" stroke="#2a1400" stroke-width="0.7" opacity="0.45"/>
<ellipse cx="811" cy="370.5" rx="3.6" ry="1.9" fill="#0a0a0a" transform="rotate(18 811 370.5)"/>
</svg>
<svg width="1024" height="532" viewBox="0 0 1024 532">
<path d="M195.6,388 L202.8,388 Q203.8,388.3 203.7,389.5 L203.9,398.6 Q203.6,400 202.2,400 L196.2,400 Q194.6,399.8 194.5,398.4 L194.4,389.6 Q194.5,388.2 195.6,388 Z M196.6,391 L196.9,397.2 L201.6,397.2 L201.9,391 Z" fill="#fff" fill-rule="evenodd"/>
<rect x="214.6" y="371.7" width="12.1" height="12.4" rx="1" fill="none" stroke="#fff" stroke-width="1.6"/><path d="M215,372 L226.5,383.8" stroke="#fff" stroke-width="1.4"/>
<path d="M253.4,371 L255.6,371 M254.5,369.9 L254.5,372.1 M261.2,371 L263.4,371 M262.3,369.9 L262.3,372.1" stroke="#fff" stroke-width="0.8"/>
<path d="M252.2,375.8 L258.3,375.8 M259,375.8 L265.2,375.8" stroke="#fff" stroke-width="1.7"/>
<path d="M276.8,370.8 L277.6,368.2 L282,368.2 L281.6,369.8 L279.8,369.8 L279.4,370.8 Z" fill="#fff"/>
<path d="M241.8,385.2 L245.8,385.2 L246.6,388 L246.2,391.5 L246.9,397 L244.8,397.2 L244,393.5 L243.2,397.2 L240.9,397 L241.5,391.5 L240.7,388.5 Z" fill="#fff"/>
<rect x="253.4" y="386.2" width="11.6" height="11.2" fill="none" stroke="#9a8260" stroke-width="0.6"/><path d="M257.3,386.2 L257.3,397.4 M261.2,386.2 L261.2,397.4 M253.4,388.2 L265,388.2 M253.4,395.2 L265,395.2" stroke="#9a8260" stroke-width="0.5"/>
<rect x="252.2" y="389.6" width="13.4" height="3.8" rx="0.8" fill="#fff"/>
<path d="M299.5,386 L304,385.6 L308,386 L311.5,385.5 L312.8,387 L312.4,389 L313.2,391 L312.6,393.5 L313.1,396 L312,398.2 L308.5,398 L305,398.8 L301.5,398 L298.6,398.6 L297.8,396.5 L298.3,394 L297.5,391.5 L298.4,389 L298,387 Z" fill="#fff"/>
<path d="M40.4,245.5 L40.4,256.6" stroke="#30e030" stroke-width="0.9"/><path d="M40.4,256.6 L51,256.6" stroke="#ff8a8a" stroke-width="0.9"/>
<text x="40.3" y="243.8" font-family="Liberation Sans, sans-serif" font-size="9.5" fill="#10e010" text-anchor="middle" font-weight="bold">y</text>
<text x="53.7" y="258.3" font-family="Liberation Sans, sans-serif" font-size="9.5" fill="#ff2a2a" text-anchor="middle" font-weight="bold">x</text>
<path d="M502.1,245.9 L512.8,245.9" stroke="#ff8a8a" stroke-width="0.9"/><path d="M502.1,245.9 L502.1,255.4" stroke="#7070ff" stroke-width="0.9"/>
<text x="515.4" y="247.6" font-family="Liberation Sans, sans-serif" font-size="9.5" fill="#ff2a2a" text-anchor="middle" font-weight="bold">x</text>
<text x="501.8" y="261" font-family="Liberation Sans, sans-serif" font-size="9.5" fill="#2a2aff" text-anchor="middle" font-weight="bold">z</text>
<path d="M511.7,493 L511.7,483.6" stroke="#50e050" stroke-width="0.9"/><path d="M511.7,493 L519,497" stroke="#f07070" stroke-width="0.9"/><path d="M511.7,493 L505,495.7" stroke="#9c9cf4" stroke-width="0.9"/>
<text x="511.7" y="483.4" font-family="Liberation Sans, sans-serif" font-size="6" fill="#70e070" text-anchor="middle" >Y</text>
<text x="520.8" y="500.2" font-family="Liberation Sans, sans-serif" font-size="6.4" fill="#f05050" text-anchor="middle" transform="rotate(25 520.8 498)">X</text>
<text x="501.5" y="499.4" font-family="Liberation Sans, sans-serif" font-size="6.4" fill="#8a8af0" text-anchor="middle" transform="rotate(-15 501.5 497)">Z</text>
</svg>
<svg width="1024" height="532" viewBox="0 0 1024 532">
<path d="M1019.65,23.65 L1022.35,26.35 M1022.35,23.65 L1019.65,26.35" stroke="#1a1a1a" stroke-width="1" fill="none"/>
<path d="M1020.05,270.25 L1022.75,272.95000000000005 M1022.75,270.25 L1020.05,272.95000000000005" stroke="#1a1a1a" stroke-width="1" fill="none"/>
<path d="M6.4,517.2 L9.4,520.2 M9.4,517.2 L6.4,520.2" stroke="#1a1a1a" stroke-width="1" fill="none"/>
<path d="M7.0,523.6 L7.0,532 M8.8,523.6 L8.8,532" stroke="#bcbcbc" stroke-width="0.8"/>
<path d="M82.9,517.2 L85.9,520.2 M85.9,517.2 L82.9,520.2" stroke="#1a1a1a" stroke-width="1" fill="none"/>
<path d="M83.5,523.6 L83.5,532 M85.30000000000001,523.6 L85.30000000000001,532" stroke="#bcbcbc" stroke-width="0.8"/>
<path d="M202.9,517.2 L205.9,520.2 M205.9,517.2 L202.9,520.2" stroke="#1a1a1a" stroke-width="1" fill="none"/>
<path d="M203.5,523.6 L203.5,532 M205.3,523.6 L205.3,532" stroke="#bcbcbc" stroke-width="0.8"/>
<path d="M79.8,515 L79.8,532 M199.4,515 L199.4,532" stroke="#d8d8d8" stroke-width="0.8"/>
</svg>
</body></html>
